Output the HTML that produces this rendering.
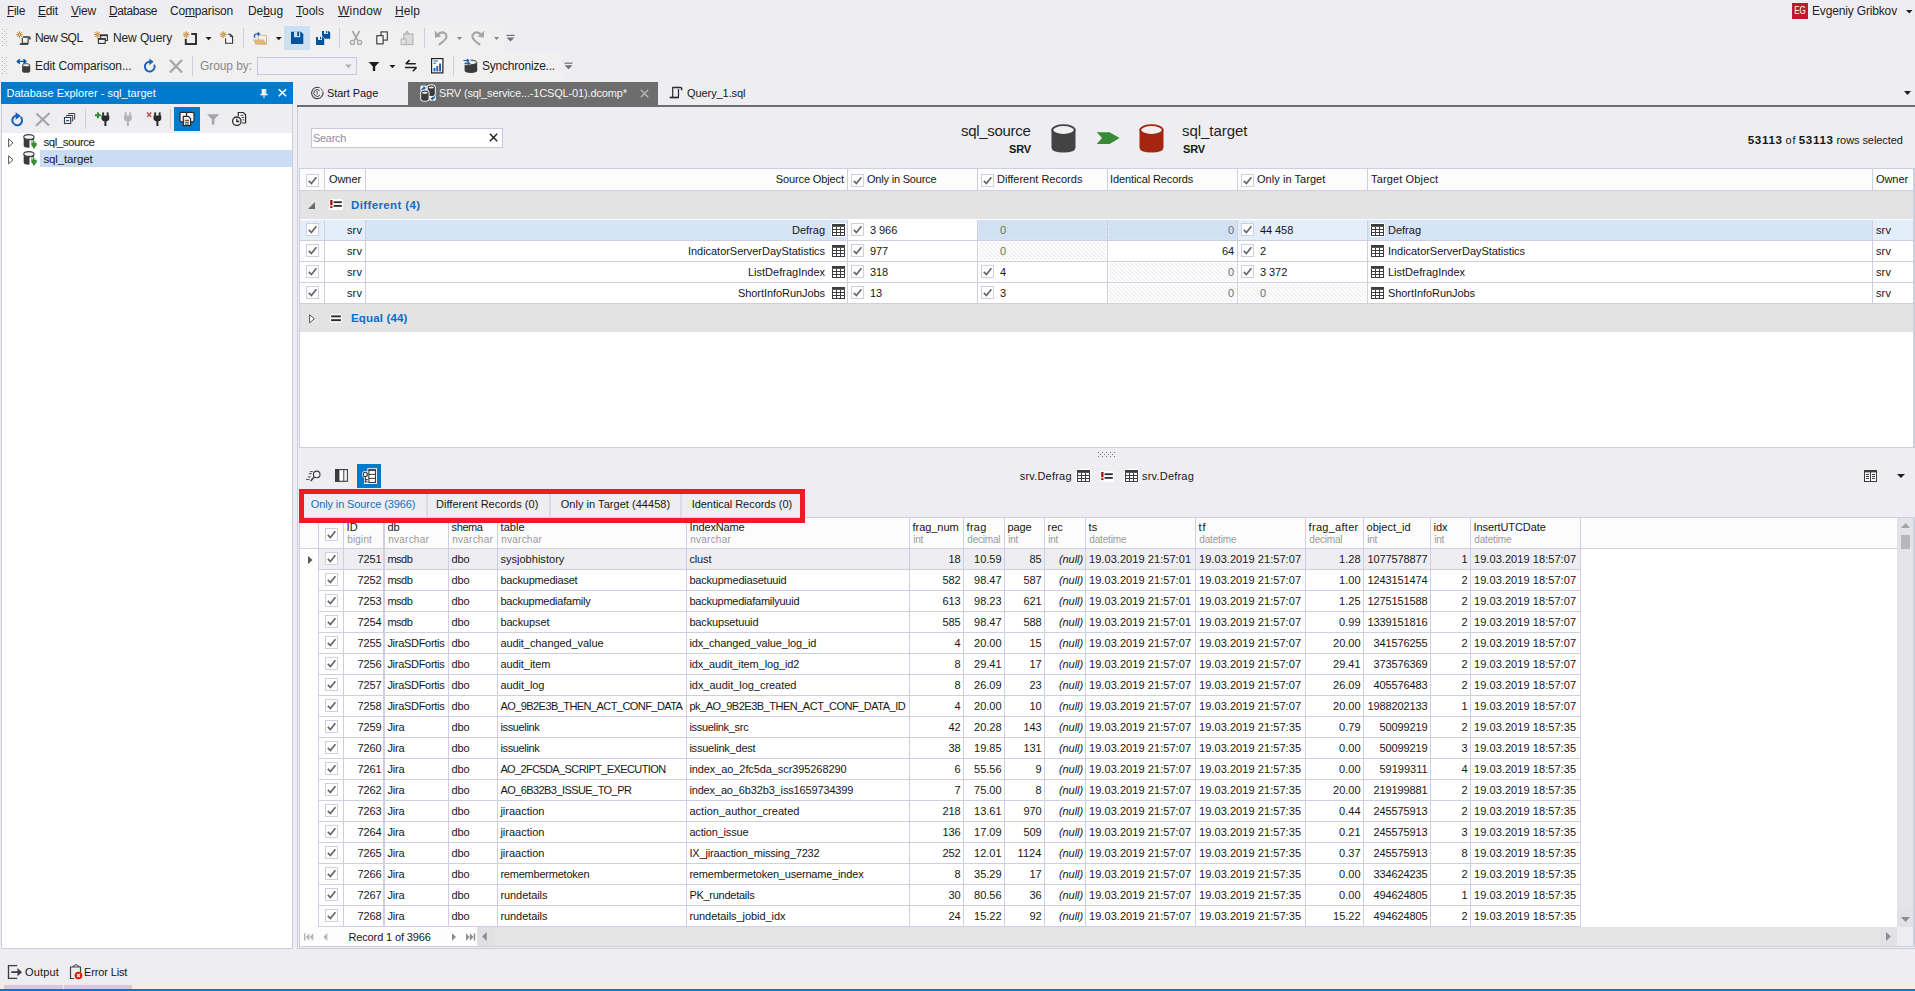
<!DOCTYPE html>
<html><head><meta charset="utf-8"><title>Data Compare</title>
<style>
html,body{margin:0;padding:0;}
body{width:1915px;height:991px;background:#eeeef2;overflow:hidden;position:relative;font-family:"Liberation Sans",sans-serif;color:#1e1e1e;}
div,svg{position:absolute;box-sizing:border-box;}
.t{white-space:nowrap;}
.m{font-size:12px;line-height:16px;color:#1e1e1e;}
.g{font-size:11px;line-height:14px;color:#161616;}
.s{font-size:10px;line-height:12px;color:#9a9a9a;}
u{text-decoration:underline;text-underline-offset:1px;}
</style></head>
<body>
<!-- top -->
<div style="left:0px;top:25px;width:504px;height:27px;background:#f0f0f1;"></div>
<div style="left:0px;top:52px;width:562px;height:28px;background:#f0f0f1;"></div>
<div class="t m" style="left:7px;top:3px;letter-spacing:-0.34px;"><u>F</u>ile</div>
<div class="t m" style="left:38px;top:3px;letter-spacing:-0.18px;"><u>E</u>dit</div>
<div class="t m" style="left:71px;top:3px;letter-spacing:-0.20px;"><u>V</u>iew</div>
<div class="t m" style="left:109px;top:3px;letter-spacing:-0.42px;"><u>D</u>atabase</div>
<div class="t m" style="left:170px;top:3px;letter-spacing:-0.17px;">Co<u>m</u>parison</div>
<div class="t m" style="left:248px;top:3px;letter-spacing:-0.08px;">De<u>b</u>ug</div>
<div class="t m" style="left:296px;top:3px;"><u>T</u>ools</div>
<div class="t m" style="left:338px;top:3px;letter-spacing:0.22px;"><u>W</u>indow</div>
<div class="t m" style="left:395px;top:3px;letter-spacing:0.08px;"><u>H</u>elp</div>
<div style="left:1792px;top:3px;width:16px;height:16px;background:#be1a2d;"><div class="t" style="left:0;top:0;width:16px;height:16px;line-height:16px;text-align:center;color:#fff;font-size:10px;transform:scaleX(0.8);">EG</div></div>
<div class="t m" style="left:1812px;top:3px;letter-spacing:-0.16px;">Evgeniy Gribkov</div>
<svg style="left:1906px;top:10px;" width="7" height="4" viewBox="0 0 7 4"><path d="M0 0h6.500l-3.250 3.600z" fill="#1e1e1e"/></svg>
<svg style="left:0;top:24px;" width="580" height="58" viewBox="0 24 580 58"><rect x="2" y="29" width="1" height="1" fill="#b4b4bc"/><rect x="6" y="29" width="1" height="1" fill="#b4b4bc"/><rect x="4" y="31" width="1" height="1" fill="#b4b4bc"/><rect x="2" y="33" width="1" height="1" fill="#b4b4bc"/><rect x="6" y="33" width="1" height="1" fill="#b4b4bc"/><rect x="4" y="35" width="1" height="1" fill="#b4b4bc"/><rect x="2" y="37" width="1" height="1" fill="#b4b4bc"/><rect x="6" y="37" width="1" height="1" fill="#b4b4bc"/><rect x="4" y="39" width="1" height="1" fill="#b4b4bc"/><rect x="2" y="41" width="1" height="1" fill="#b4b4bc"/><rect x="6" y="41" width="1" height="1" fill="#b4b4bc"/><rect x="4" y="43" width="1" height="1" fill="#b4b4bc"/><rect x="2" y="45" width="1" height="1" fill="#b4b4bc"/><rect x="6" y="45" width="1" height="1" fill="#b4b4bc"/><path d="M19.5 31.3V37.9M16.2 34.6H22.8M17.1 32.2L21.9 37.0M17.1 37.0L21.9 32.2" stroke="#c27d1a" stroke-width="0.95" fill="none"/><circle cx="19.5" cy="34.6" r="1.05" fill="#f6e8d0" stroke="#c27d1a" stroke-width="0.7"/><path d="M22.300 38v5.300h5.800v-5.300" fill="#f3f3f7" stroke="#333" stroke-width="1.100"/><path d="M22.800 37.100h6q1.200 0 1.200 1.400v1" stroke="#333" stroke-width="1.500" fill="none"/><path d="M19.800 44.100h8.300" stroke="#333" stroke-width="1.600" fill="none"/><path d="M97.3 31.3V37.9M94.0 34.6H100.6M94.89999999999999 32.2L99.7 37.0M94.89999999999999 37.0L99.7 32.2" stroke="#c27d1a" stroke-width="0.95" fill="none"/><circle cx="97.3" cy="34.6" r="1.05" fill="#f6e8d0" stroke="#c27d1a" stroke-width="0.7"/><rect x="100.600" y="35.200" width="6.800" height="5.300" fill="#f3f3f7" stroke="#333" stroke-width="1.100"/><rect x="100.100" y="34.500" width="7.800" height="1.700" fill="#333"/><rect x="98.400" y="38.700" width="6.800" height="4.700" fill="#f3f3f7" stroke="#333" stroke-width="1.100"/><rect x="97.900" y="38.100" width="7.800" height="1.700" fill="#333"/><path d="M186.2 31.349999999999998V37.949999999999996M182.89999999999998 34.65H189.5M183.79999999999998 32.25L188.6 37.05M183.79999999999998 37.05L188.6 32.25" stroke="#c27d1a" stroke-width="0.95" fill="none"/><circle cx="186.2" cy="34.65" r="1.05" fill="#f6e8d0" stroke="#c27d1a" stroke-width="0.7"/><path d="M185.800 38.800V44H196V33.900H191.200" stroke="#333" stroke-width="2" fill="none"/><path d="M205.6 36.9h6l-3.0 3.3z" fill="#1e1e1e"/><path d="M223.2 31.349999999999998V37.949999999999996M219.89999999999998 34.65H226.5M220.79999999999998 32.25L225.6 37.05M220.79999999999998 37.05L225.6 32.25" stroke="#c27d1a" stroke-width="0.95" fill="none"/><circle cx="223.2" cy="34.65" r="1.05" fill="#f6e8d0" stroke="#c27d1a" stroke-width="0.7"/><path d="M225.600 38.200v5h7v-6.700l-2.200-2.200h-2.600" stroke="#333" stroke-width="1.100" fill="#f5f5f8"/><path d="M230.200 34.400v2.300h2.300" stroke="#333" stroke-width="0.900" fill="none"/><rect x="243" y="28" width="1" height="20" fill="#cccedb"/><path d="M258.300 35.200h8.200v9h-8.200z" fill="#f2f2f6" stroke="#dcb67a" stroke-width="1"/><path d="M253.200 39.400h10.500l3.300 5.200h-11.500z" fill="#dcb67a"/><path d="M254.800 37.800q-1.500-3.500 2.400-3.900h1.200" stroke="#1a5fb4" stroke-width="1.400" fill="none"/><path d="M257.700 31.500l2.700 2.400-2.700 2.400z" fill="#1a5fb4"/><path d="M275.8 36.9h6l-3.0 3.3z" fill="#1e1e1e"/><rect x="284" y="26" width="26" height="24" fill="#cde0f3"/><path d="M291 31.800h10l2.300 2.200v10h-12.300z" fill="#00539c"/><rect x="294" y="31.800" width="6.200" height="5.400" fill="#cde0f3"/><rect x="297.200" y="31.800" width="1.900" height="4.200" fill="#00539c"/><path d="M322 30.900h6.500l1.700 1.700v6.100h-8.200z" fill="#00539c"/><rect x="324" y="30.900" width="4" height="3" fill="#f0f0f1"/><rect x="326" y="30.900" width="1.200" height="2.300" fill="#00539c"/><path d="M315.500 36.400h7.200l2 2v7h-9.200z" fill="#f0f0f1"/><path d="M316 36.900h6.500l1.700 1.700v6.300h-8.200z" fill="#00539c"/><rect x="318" y="36.900" width="4" height="3" fill="#f0f0f1"/><rect x="320" y="36.900" width="1.200" height="2.300" fill="#00539c"/><rect x="339" y="28" width="1" height="20" fill="#cccedb"/><path d="M352.400 30.800l5.200 9.500M359.600 30.800l-5.200 9.500" stroke="#a6a6a6" stroke-width="1.700" fill="none"/><circle cx="352.400" cy="42.400" r="2" stroke="#a6a6a6" stroke-width="1.300" fill="none"/><circle cx="359.600" cy="42.400" r="2" stroke="#a6a6a6" stroke-width="1.300" fill="none"/><rect x="381" y="31.900" width="6.300" height="8.200" fill="#f3f3f7" stroke="#2b2b2b" stroke-width="1.050"/><rect x="376.800" y="35.700" width="6.300" height="8.200" fill="#f3f3f7" stroke="#2b2b2b" stroke-width="1.050"/><path d="M405 34.200l2-2.900 2 2.900" stroke="#a8a8a8" stroke-width="1.100" fill="none"/><rect x="403.800" y="34" width="9.200" height="10.600" fill="#dcdcdc" stroke="#ababab" stroke-width="1"/><rect x="401.100" y="39" width="5" height="5.600" fill="#e2e2e2" stroke="#b4b4b4" stroke-width="1"/><rect x="424" y="28" width="1" height="20" fill="#cccedb"/><path d="M437 35.300q4.200-4.600 8-2 3.400 3.400-1 7.500l-5.200 4" stroke="#a6a6a6" stroke-width="2.100" fill="none"/><path d="M434.700 30.800l0.400 7 6.200-1.400z" fill="#a6a6a6"/><path d="M456.8 37h5.4l-2.7 3.0z" fill="#8a8a8a"/><path d="M481.900 35.300q-4.200-4.600-8-2-3.400 3.400 1 7.500l5.200 4" stroke="#a6a6a6" stroke-width="2.100" fill="none"/><path d="M484.200 30.800l-0.400 7-6.200-1.400z" fill="#a6a6a6"/><path d="M493.9 37h5.4l-2.7 3.0z" fill="#8a8a8a"/><rect x="506.5" y="34.8" width="8" height="1.2" fill="#717171"/><path d="M506.5 37.4h8l-4 4z" fill="#717171"/><rect x="2" y="57" width="1" height="1" fill="#b4b4bc"/><rect x="6" y="57" width="1" height="1" fill="#b4b4bc"/><rect x="4" y="59" width="1" height="1" fill="#b4b4bc"/><rect x="2" y="61" width="1" height="1" fill="#b4b4bc"/><rect x="6" y="61" width="1" height="1" fill="#b4b4bc"/><rect x="4" y="63" width="1" height="1" fill="#b4b4bc"/><rect x="2" y="65" width="1" height="1" fill="#b4b4bc"/><rect x="6" y="65" width="1" height="1" fill="#b4b4bc"/><rect x="4" y="67" width="1" height="1" fill="#b4b4bc"/><rect x="2" y="69" width="1" height="1" fill="#b4b4bc"/><rect x="6" y="69" width="1" height="1" fill="#b4b4bc"/><rect x="4" y="71" width="1" height="1" fill="#b4b4bc"/><rect x="2" y="73" width="1" height="1" fill="#b4b4bc"/><rect x="6" y="73" width="1" height="1" fill="#b4b4bc"/><path d="M18.500 61.400h6M19.800 59.200l-2.500 2.200 2.500 2.200M23.400 59.200l2.500 2.200-2.500 2.200" stroke="#00539c" stroke-width="1.400" fill="none"/><path d="M22.100 65.300v5.600q0 1.900 4.050 1.900t4.050-1.900v-5.600z" fill="#3c3c3c"/><ellipse cx="26.150" cy="65.200" rx="3.600" ry="1.600" fill="#f0f0f0" stroke="#3c3c3c" stroke-width="0.900"/><path d="M154.200 64.600a4.900 4.900 0 1 1-4.400-2.900" stroke="#1a5fb4" stroke-width="1.900" fill="none"/><path d="M149.300 58.400l4.300 3.400-4.300 3.400z" fill="#1a5fb4"/><path d="M170 60l12 12.500M182 60l-12 12.500" stroke="#a6a6a6" stroke-width="2.300" fill="none"/><rect x="192" y="56" width="1" height="20" fill="#cccedb"/><rect x="257.500" y="57.500" width="99" height="17" fill="#f0f0f4" stroke="#c6cadf" stroke-width="1"/><path d="M345 64.6h6.6l-3.3 3.5999999999999996z" fill="#b0b0b0"/><path d="M368.700 62.100h10.600l-4.100 4.400v4.600h-2.400v-4.600z" fill="#1e1e1e"/><path d="M389.4 64.9h6l-3.0 3.3z" fill="#1e1e1e"/><path d="M405.800 63.800h10M409.600 60.200l-3.800 3.600" stroke="#1e1e1e" stroke-width="1.600" fill="none"/><path d="M405 67.500h11.600M412.800 71.200l3.800-3.700" stroke="#1e1e1e" stroke-width="1.600" fill="none"/><rect x="431.600" y="58.600" width="11.300" height="14.300" fill="#fff" stroke="#1e1e1e" stroke-width="1.200"/><path d="M433.500 61h4.500M433.500 63.300h2.500" stroke="#1a5fb4" stroke-width="1.100"/><rect x="433.500" y="68" width="1.900" height="3.400" fill="#1a5fb4"/><rect x="436.300" y="66" width="1.900" height="5.400" fill="#1a5fb4"/><rect x="439.100" y="63.500" width="1.900" height="7.900" fill="#1a5fb4"/><rect x="453" y="56" width="1" height="20" fill="#cccedb"/><path d="M464.600 62.400v7.800q0 2.700 6.300 2.700t6.300-2.700v-7.800z" fill="#3a3a3a"/><ellipse cx="470.900" cy="62.400" rx="5.800" ry="2.300" fill="#ececec" stroke="#3a3a3a" stroke-width="1"/><rect x="463" y="58.800" width="7.500" height="6.300" fill="#f0f0f1" opacity="0.800"/><path d="M463.400 60.500h5.400M466.700 58.800l1.900 1.700-1.900 1.700" stroke="#1a5fb4" stroke-width="1.100" fill="none"/><path d="M464.600 63.400h5.400M467.900 61.700l1.900 1.700-1.900 1.700" stroke="#1a5fb4" stroke-width="1.100" fill="none"/><rect x="564.5" y="62.6" width="8" height="1.2" fill="#717171"/><path d="M564.5 65.2h8l-4 4z" fill="#717171"/></svg>
<div class="t m" style="left:35px;top:30px;letter-spacing:-0.55px;">New SQL</div>
<div class="t m" style="left:113px;top:30px;letter-spacing:-0.11px;">New Query</div>
<div class="t m" style="left:35px;top:58px;letter-spacing:-0.12px;">Edit Comparison...</div>
<div class="t m" style="left:200px;top:58px;color:#8a8a8a;letter-spacing:-0.08px;">Group by:</div>
<div class="t m" style="left:482px;top:58px;letter-spacing:-0.22px;">Synchronize...</div>
<!-- left -->
<div style="left:1px;top:82px;width:292px;height:867px;background:#ffffff;border:1px solid #cccedb;"></div>
<div style="left:1px;top:82px;width:292px;height:22px;background:#007acc;"></div>
<div class="t g" style="left:6.5px;top:86px;color:#fff;">Database Explorer - sql_target</div>
<div style="left:2px;top:104px;width:290px;height:29px;background:#eeeef2;"></div>
<svg style="left:0;top:82px;" width="294" height="52" viewBox="0 82 294 52"><path d="M261.700 89h4.600v5h1.400v1.200h-3.200v3h-1v-3h-3.200v-1.200h1.400z" fill="#fff"/><rect x="264.600" y="89.600" width="0.900" height="4.400" fill="#007acc" opacity="0.350"/><path d="M278.700 89.200l7.500 7M286.200 89.200l-7.500 7" stroke="#fff" stroke-width="1.500" fill="none"/><path d="M20.8 117.0a4.900 4.900 0 1 1-4.300-1.500" stroke="#1a5fb4" stroke-width="2" fill="none"/><path d="M15.6 112.2l5.300 3.800-5.300 3.800z" fill="#1a5fb4"/><path d="M36.500 113.500l12.500 12M49.500 113l-13.500 12.800" stroke="#a6a6a6" stroke-width="2.200" fill="none"/><path d="M68.500 114.500v-1h6.200v5.500h-1" stroke="#3c3c3c" stroke-width="1" fill="none"/><path d="M66.500 116.500v-1h6.200v5.500h-1" stroke="#3c3c3c" stroke-width="1" fill="none"/><rect x="64.500" y="117.500" width="6.200" height="6" fill="#f6f6f6" stroke="#3c3c3c" stroke-width="1.100"/><path d="M66 120.600h3.200" stroke="#1a5fb4" stroke-width="1.300"/><rect x="85" y="109" width="1" height="20" fill="#cccedb"/><path d="M97.900 112.300v6M94.900 115.300h6" stroke="#2e8b2e" stroke-width="1.900"/><rect x="102.2" y="112.4" width="1.900" height="3.400" fill="#2b2b2b"/><rect x="106.7" y="112.4" width="1.900" height="3.400" fill="#2b2b2b"/><path d="M101.5 115.4h7.800v2.800q0 2.600-2.900 3v4.800h-2v-4.800q-2.900-0.400-2.900-3z" fill="#2b2b2b"/><rect x="124.7" y="112.4" width="1.900" height="3.400" fill="#b4b4b4"/><rect x="129.2" y="112.4" width="1.900" height="3.400" fill="#b4b4b4"/><path d="M124 115.4h7.800v2.800q0 2.600-2.900 3v4.800h-2v-4.800q-2.900-0.400-2.900-3z" fill="#b4b4b4"/><path d="M147 112.500l4.300 4.300M151.300 112.500l-4.300 4.300" stroke="#c0392b" stroke-width="1.200"/><rect x="154.2" y="112.4" width="1.900" height="3.400" fill="#2b2b2b"/><rect x="158.7" y="112.4" width="1.900" height="3.400" fill="#2b2b2b"/><path d="M153.5 115.4h7.800v2.800q0 2.600-2.900 3v4.800h-2v-4.800q-2.900-0.400-2.900-3z" fill="#2b2b2b"/><rect x="170" y="109" width="1" height="20" fill="#cccedb"/><rect x="174" y="107" width="26" height="24" fill="#007acc"/><rect x="180" y="112.300" width="7.500" height="9.500" rx="1.500" fill="#f6f6f6" stroke="#2b2b2b" stroke-width="1.200"/><rect x="186.500" y="112.300" width="7.500" height="9.500" rx="1.500" fill="#f6f6f6" stroke="#2b2b2b" stroke-width="1.200"/><path d="M183.300 116.300h5l2.300 2.300v7h-7.300z" fill="#f6f6f6" stroke="#2b2b2b" stroke-width="1.200"/><path d="M184.800 120.300h4.300M184.800 122.200h4.300M184.800 124.100h4.300" stroke="#2b2b2b" stroke-width="0.900"/><path d="M207 114.200h12.200l-4.800 5v5.300h-2.600v-5.300z" fill="#a6a6a6"/><path d="M238.300 116v-3.500h5l2.300 2.300v8.200h-3.600" fill="#f6f6f6" stroke="#2b2b2b" stroke-width="1.200"/><path d="M240.500 115.300h3M241.500 117.600h2.800M242.500 119.900h1.800" stroke="#2b2b2b" stroke-width="0.900"/><circle cx="236.800" cy="121.200" r="4.200" fill="#f6f6f6" stroke="#2b2b2b" stroke-width="1.300"/><path d="M236.800 118.700v2.800h2.500" stroke="#2b2b2b" stroke-width="1.300" fill="none"/></svg>
<div style="left:40px;top:150px;width:252px;height:17px;background:#c9def5;"></div>
<svg style="left:8px;top:138px;" width="6" height="10" viewBox="0 0 6 10"><path d="M0.600 0.800v8l4.400-4z" fill="#fff" stroke="#555" stroke-width="1"/></svg>
<svg style="left:23px;top:134px;" width="15" height="15" viewBox="0 0 15 15"><path d="M0.700 3v8.500q0 2.200 5.200 2.200t5.200-2.200v-8.500z" fill="#3c3c3c"/><ellipse cx="5.900" cy="3" rx="5.200" ry="2.400" fill="#f6f6f6" stroke="#3c3c3c" stroke-width="1.100"/><rect x="6.500" y="6.300" width="8" height="8.500" fill="#fff"/><path d="M8.500 6.800v2h1.300v-2h1.600v2h1.300v-2h0.100v2h0.900v2.200q0 1.500-1.800 1.900v1.700h-1.800v-1.700q-1.800-0.400-1.800-1.900v-2.200h0.900v-2z" fill="#388a34"/></svg>
<div class="t g" style="left:43.5px;top:135.3px;font-size:11.5px;letter-spacing:-0.46px;">sql_source</div>
<svg style="left:8px;top:155px;" width="6" height="10" viewBox="0 0 6 10"><path d="M0.600 0.800v8l4.400-4z" fill="#fff" stroke="#555" stroke-width="1"/></svg>
<svg style="left:23px;top:151px;" width="15" height="15" viewBox="0 0 15 15"><path d="M0.700 3v8.500q0 2.200 5.200 2.200t5.200-2.200v-8.500z" fill="#3c3c3c"/><ellipse cx="5.900" cy="3" rx="5.200" ry="2.400" fill="#f6f6f6" stroke="#3c3c3c" stroke-width="1.100"/><rect x="6.500" y="6.300" width="8" height="8.500" fill="#fff"/><path d="M8.500 6.800v2h1.300v-2h1.600v2h1.300v-2h0.100v2h0.900v2.200q0 1.500-1.800 1.900v1.700h-1.800v-1.700q-1.800-0.400-1.800-1.900v-2.200h0.900v-2z" fill="#388a34"/></svg>
<div class="t g" style="left:43.5px;top:152.3px;font-size:11.5px;letter-spacing:-0.15px;">sql_target</div>
<!-- main1 -->
<svg style="left:310px;top:86px;" width="14" height="14" viewBox="0 0 14 14"><path d="M9.600 1.700a5.700 5.700 0 1 0 3.300 4" stroke="#3c3c3c" stroke-width="1.100" fill="none"/><path d="M10.800 2.600l1.600 1.900" stroke="#3c3c3c" stroke-width="1" fill="none"/><path d="M9.600 4.600a3.400 3.400 0 1 0 0.400 4.300" stroke="#3c3c3c" stroke-width="1" fill="none"/><path d="M6.300 6l0.900-0.700v3.200" stroke="#3c3c3c" stroke-width="0.800" fill="none"/></svg>
<div class="t g" style="left:327px;top:86px;letter-spacing:-0.08px;">Start Page</div>
<div style="left:408px;top:82px;width:250px;height:23px;background:#6d6d6d;"></div>
<svg style="left:418px;top:84px;" width="20" height="19" viewBox="418 84 20 19"><rect x="420.300" y="85.600" width="6.500" height="5.500" rx="1.500" fill="#f4f4f4"/><rect x="429.300" y="95" width="6.500" height="5.800" rx="1.500" fill="#f4f4f4"/><path d="M427.8 87.3v6.8q0 2.0 3.5 2.0t3.5-2.0v-6.8q0-2.0-3.5-2.0t-3.5 2.0z" fill="#f4f4f4" stroke="#f4f4f4" stroke-width="2"/><path d="M427.8 87.3v6.8q0 2.0 3.5 2.0t3.5-2.0v-6.8q0-2.0-3.5-2.0t-3.5 2.0z" fill="#3a3a3a"/><ellipse cx="431.3" cy="87.5" rx="2.7" ry="1.1" fill="#e4e4e4"/><path d="M421.2 92.6v6.2q0 2.0 3.7 2.0t3.7-2.0v-6.2q0-2.0-3.7-2.0t-3.7 2.0z" fill="#f4f4f4" stroke="#f4f4f4" stroke-width="2"/><path d="M421.2 92.6v6.2q0 2.0 3.7 2.0t3.7-2.0v-6.2q0-2.0-3.7-2.0t-3.7 2.0z" fill="#3a3a3a"/><ellipse cx="424.9" cy="92.8" rx="2.9000000000000004" ry="1.1" fill="#e4e4e4"/><path d="M421.900 90.300q0-2.300 2.300-2.300M423.400 86.500l1.600 1.500-1.600 1.500" stroke="#1a5fb4" stroke-width="1.200" fill="none"/><path d="M434.500 96.300q0 2.300-2.300 2.300M433 97.100l-1.600 1.500 1.600 1.500" stroke="#1a5fb4" stroke-width="1.200" fill="none"/></svg>
<div class="t g" style="left:439px;top:86px;color:#f3f3f3;letter-spacing:-0.14px;">SRV (sql_service...-1CSQL-01).dcomp*</div>
<svg style="left:640px;top:89px;" width="9" height="9" viewBox="0 0 9 9"><path d="M0.800 0.800l7.400 7.400M8.200 0.800l-7.400 7.400" stroke="#b4b4b4" stroke-width="1.500"/></svg>
<svg style="left:669px;top:86px;" width="14" height="13" viewBox="0 0 14 13"><path d="M3.700 1.600v9.300M9.500 3v8" stroke="#2b2b2b" stroke-width="1.200" fill="none"/><path d="M3.200 1.400h8.300q1.200 0 1.200 1.300v1.500" stroke="#2b2b2b" stroke-width="1.500" fill="none"/><path d="M0.700 11.500h9.300" stroke="#2b2b2b" stroke-width="1.700" fill="none"/></svg>
<div class="t g" style="left:687px;top:86px;letter-spacing:-0.08px;">Query_1.sql</div>
<svg style="left:1904px;top:91px;" width="7" height="4" viewBox="0 0 7 4"><path d="M0 0h7l-3.500 4z" fill="#1e1e1e"/></svg>
<div style="left:297px;top:105px;width:1618px;height:2px;background:#6d6d6d;"></div>
<div style="left:297px;top:107px;width:1px;height:842px;background:#cccedb;"></div>
<div style="left:297px;top:948px;width:1618px;height:1px;background:#cccedb;"></div>
<div style="left:311px;top:128px;width:192px;height:20px;background:#ffffff;border:1px solid #c6cadf;"></div>
<div class="t g" style="left:313px;top:131px;color:#8e8e9a;letter-spacing:-0.31px;">Search</div>
<svg style="left:489px;top:133px;" width="9" height="9" viewBox="0 0 9 9"><path d="M0.800 0.800l7.400 7.400M8.200 0.800l-7.400 7.400" stroke="#1e1e1e" stroke-width="1.400"/></svg>
<div class="t m" style="left:961px;top:122px;font-size:15px;line-height:18px;letter-spacing:-0.30px;">sql_source</div>
<div class="t g" style="left:1009px;top:142px;font-weight:bold;letter-spacing:-0.14px;">SRV</div>
<svg style="left:1050.5px;top:124px;" width="25" height="29" viewBox="0 0 25 29"><path d="M0.500 5.500v18q0 5 12 5t12-5v-18z" fill="#434343"/><ellipse cx="12.500" cy="6" rx="11.200" ry="4.800" fill="#f0f0f3" stroke="#434343" stroke-width="1.800"/></svg>
<svg style="left:1096px;top:131px;" width="25" height="14" viewBox="0 0 25 14"><path d="M0.800 1.300h12.800l10 5.800-10 5.800h-12.800l5.200-5.800z" fill="#378a36"/></svg>
<svg style="left:1138.5px;top:124px;" width="25" height="29" viewBox="0 0 25 29"><path d="M0.500 5.500v18q0 5 12 5t12-5v-18z" fill="#a5260f"/><ellipse cx="12.500" cy="6" rx="11.200" ry="4.800" fill="#f0f0f3" stroke="#a5260f" stroke-width="1.800"/></svg>
<div class="t m" style="left:1182px;top:122px;font-size:15px;line-height:18px;letter-spacing:-0.04px;">sql_target</div>
<div class="t g" style="left:1183px;top:142px;font-weight:bold;letter-spacing:-0.14px;">SRV</div>
<div class="t g" style="left:1747.7px;top:133px;font-weight:bold;font-size:11.600px;letter-spacing:0.68px;">53113</div>
<div class="t g" style="left:1785.5px;top:133px;letter-spacing:0.81px;">of</div>
<div class="t g" style="left:1798.7px;top:133px;font-weight:bold;font-size:11.600px;letter-spacing:0.68px;">53113</div>
<div class="t g" style="left:1836.5px;top:133px;letter-spacing:-0.07px;">rows selected</div>
<div style="left:299px;top:168px;width:1615px;height:280px;background:#ffffff;border:1px solid #cdd0e0;"></div>
<div style="left:1914px;top:168px;width:1px;height:280px;background:#cdd0e0;"></div>
<div style="left:300px;top:169px;width:1613px;height:21px;background:#fcfcfc;"></div>
<div style="left:300px;top:190px;width:1613px;height:1px;background:#cdd0e0;"></div>
<div style="left:324px;top:169px;width:1px;height:21px;background:#cdd0e0;"></div>
<div style="left:365px;top:169px;width:1px;height:21px;background:#cdd0e0;"></div>
<div style="left:847px;top:169px;width:1px;height:21px;background:#cdd0e0;"></div>
<div style="left:977px;top:169px;width:1px;height:21px;background:#cdd0e0;"></div>
<div style="left:1107px;top:169px;width:1px;height:21px;background:#cdd0e0;"></div>
<div style="left:1237px;top:169px;width:1px;height:21px;background:#cdd0e0;"></div>
<div style="left:1367px;top:169px;width:1px;height:21px;background:#cdd0e0;"></div>
<div style="left:1872px;top:169px;width:1px;height:21px;background:#cdd0e0;"></div>
<svg style="left:306px;top:174px;" width="13" height="13" viewBox="0 0 13 13"><rect x="0.500" y="0.500" width="12" height="12" fill="#fff" stroke="#cdd0e0" stroke-width="1"/><path d="M2.800 6.800l2.600 2.700 5-6.300" stroke="#666" stroke-width="1.700" fill="none"/></svg>
<div class="t g" style="left:329px;top:172px;letter-spacing:-0.08px;">Owner</div>
<div class="t g" style="left:775.8px;top:172px;letter-spacing:-0.12px;">Source Object</div>
<svg style="left:851px;top:174px;" width="13" height="13" viewBox="0 0 13 13"><rect x="0.500" y="0.500" width="12" height="12" fill="#fff" stroke="#cdd0e0" stroke-width="1"/><path d="M2.800 6.800l2.600 2.700 5-6.300" stroke="#666" stroke-width="1.700" fill="none"/></svg>
<div class="t g" style="left:867px;top:172px;letter-spacing:-0.20px;">Only in Source</div>
<svg style="left:981px;top:174px;" width="13" height="13" viewBox="0 0 13 13"><rect x="0.500" y="0.500" width="12" height="12" fill="#fff" stroke="#cdd0e0" stroke-width="1"/><path d="M2.800 6.800l2.600 2.700 5-6.300" stroke="#666" stroke-width="1.700" fill="none"/></svg>
<div class="t g" style="left:997px;top:172px;">Different Records</div>
<div class="t g" style="left:1110px;top:172px;letter-spacing:-0.11px;">Identical Records</div>
<svg style="left:1241px;top:174px;" width="13" height="13" viewBox="0 0 13 13"><rect x="0.500" y="0.500" width="12" height="12" fill="#fff" stroke="#cdd0e0" stroke-width="1"/><path d="M2.800 6.800l2.600 2.700 5-6.300" stroke="#666" stroke-width="1.700" fill="none"/></svg>
<div class="t g" style="left:1257px;top:172px;letter-spacing:0.05px;">Only in Target</div>
<div class="t g" style="left:1371px;top:172px;letter-spacing:0.14px;">Target Object</div>
<div class="t g" style="left:1876px;top:172px;letter-spacing:-0.08px;">Owner</div>
<div style="left:300px;top:191px;width:1613px;height:28px;background:#e3e3e3;"></div>
<svg style="left:308px;top:202px;" width="8" height="8" viewBox="0 0 8 8"><path d="M7 0v7h-7z" fill="#6a6a6a"/></svg>
<svg style="left:328.6px;top:199.3px;" width="14" height="11" viewBox="0 0 14 11"><rect x="0" y="0" width="14" height="11" rx="1.500" fill="#fff" opacity="0.850"/><rect x="1.200" y="1" width="2.300" height="5.200" fill="#a01000"/><rect x="1.200" y="7.200" width="2.300" height="1.900" fill="#a01000"/><rect x="4.600" y="2.300" width="8.200" height="1.800" fill="#2b2b2b"/><rect x="4.600" y="6" width="8.200" height="1.800" fill="#2b2b2b"/></svg>
<div class="t g" style="left:351px;top:198px;font-weight:bold;color:#0b6fcc;font-size:11.500px;letter-spacing:0.38px;">Different (4)</div>
<div style="left:300px;top:219px;width:1613px;height:1px;background:#ffffff;"></div>
<div style="left:300px;top:220px;width:1613px;height:20px;background:#e4edfa;"></div>
<div style="left:366px;top:220px;width:480px;height:20px;background:#d6e4f7;"></div>
<div style="left:848px;top:220px;width:129px;height:20px;background:#ffffff;"></div>
<div style="left:978px;top:220px;width:259px;height:20px;background:#d6e4f7;"></div>
<div style="left:1368px;top:220px;width:504px;height:20px;background:#d6e4f7;"></div>
<div style="left:979px;top:221px;width:127px;height:18px;background:repeating-linear-gradient(45deg,#d6e4f7 0,#d6e4f7 2.05px,#cedcf0 2.05px,#cedcf0 2.83px);"></div>
<div style="left:1109px;top:221px;width:127px;height:18px;background:repeating-linear-gradient(45deg,#d6e4f7 0,#d6e4f7 2.05px,#cedcf0 2.05px,#cedcf0 2.83px);"></div>
<div style="left:300px;top:240px;width:1613px;height:1px;background:#cdd0e0;"></div>
<div style="left:324px;top:220px;width:1px;height:20px;background:#cdd0e0;"></div>
<div style="left:365px;top:220px;width:1px;height:20px;background:#cdd0e0;"></div>
<div style="left:847px;top:220px;width:1px;height:20px;background:#cdd0e0;"></div>
<div style="left:977px;top:220px;width:1px;height:20px;background:#cdd0e0;"></div>
<div style="left:1107px;top:220px;width:1px;height:20px;background:#cdd0e0;"></div>
<div style="left:1237px;top:220px;width:1px;height:20px;background:#cdd0e0;"></div>
<div style="left:1367px;top:220px;width:1px;height:20px;background:#cdd0e0;"></div>
<div style="left:1872px;top:220px;width:1px;height:20px;background:#cdd0e0;"></div>
<svg style="left:306px;top:223px;" width="13" height="13" viewBox="0 0 13 13"><rect x="0.500" y="0.500" width="12" height="12" fill="#fff" stroke="#cdd0e0" stroke-width="1"/><path d="M2.800 6.800l2.600 2.700 5-6.300" stroke="#666" stroke-width="1.700" fill="none"/></svg>
<div class="t g" style="left:347px;top:223px;letter-spacing:0.11px;">srv</div>
<div class="t g" style="left:792px;top:223px;">Defrag</div>
<svg style="left:831px;top:223px;" width="15" height="14" viewBox="0 0 15 14"><rect x="0" y="0" width="15" height="14" rx="1" fill="#fff" opacity="0.900"/><rect x="1" y="1" width="13" height="12" fill="#3c3c3c"/><rect x="1" y="3" width="13" height="0.600" fill="#6a6a6a"/><rect x="2" y="4" width="3" height="2" fill="#fff"/><rect x="6" y="4" width="3" height="2" fill="#fff"/><rect x="10" y="4" width="3" height="2" fill="#fff"/><rect x="2" y="7" width="3" height="2" fill="#fff"/><rect x="6" y="7" width="3" height="2" fill="#fff"/><rect x="10" y="7" width="3" height="2" fill="#fff"/><rect x="2" y="10" width="3" height="2" fill="#fff"/><rect x="6" y="10" width="3" height="2" fill="#fff"/><rect x="10" y="10" width="3" height="2" fill="#fff"/></svg>
<svg style="left:851px;top:223px;" width="13" height="13" viewBox="0 0 13 13"><rect x="0.500" y="0.500" width="12" height="12" fill="#fff" stroke="#cdd0e0" stroke-width="1"/><path d="M2.800 6.800l2.600 2.700 5-6.300" stroke="#666" stroke-width="1.700" fill="none"/></svg>
<div class="t g" style="left:870px;top:223px;letter-spacing:-0.07px;">3 966</div>
<div class="t g" style="left:1000px;top:223px;color:#6e6e6e;letter-spacing:-0.12px;">0</div>
<div class="t g" style="left:1228px;top:223px;color:#6e6e6e;letter-spacing:-0.12px;">0</div>
<svg style="left:1241px;top:223px;" width="13" height="13" viewBox="0 0 13 13"><rect x="0.500" y="0.500" width="12" height="12" fill="#fff" stroke="#cdd0e0" stroke-width="1"/><path d="M2.800 6.800l2.600 2.700 5-6.300" stroke="#666" stroke-width="1.700" fill="none"/></svg>
<div class="t g" style="left:1260px;top:223px;letter-spacing:-0.08px;">44 458</div>
<svg style="left:1370px;top:223px;" width="15" height="14" viewBox="0 0 15 14"><rect x="0" y="0" width="15" height="14" rx="1" fill="#fff" opacity="0.900"/><rect x="1" y="1" width="13" height="12" fill="#3c3c3c"/><rect x="1" y="3" width="13" height="0.600" fill="#6a6a6a"/><rect x="2" y="4" width="3" height="2" fill="#fff"/><rect x="6" y="4" width="3" height="2" fill="#fff"/><rect x="10" y="4" width="3" height="2" fill="#fff"/><rect x="2" y="7" width="3" height="2" fill="#fff"/><rect x="6" y="7" width="3" height="2" fill="#fff"/><rect x="10" y="7" width="3" height="2" fill="#fff"/><rect x="2" y="10" width="3" height="2" fill="#fff"/><rect x="6" y="10" width="3" height="2" fill="#fff"/><rect x="10" y="10" width="3" height="2" fill="#fff"/></svg>
<div class="t g" style="left:1388px;top:223px;">Defrag</div>
<div class="t g" style="left:1876px;top:223px;letter-spacing:0.11px;">srv</div>
<div style="left:979px;top:242px;width:127px;height:18px;background:repeating-linear-gradient(45deg,#ffffff 0,#ffffff 2.05px,#f1f1f2 2.05px,#f1f1f2 2.83px);"></div>
<div style="left:300px;top:261px;width:1613px;height:1px;background:#cdd0e0;"></div>
<div style="left:324px;top:241px;width:1px;height:20px;background:#cdd0e0;"></div>
<div style="left:365px;top:241px;width:1px;height:20px;background:#cdd0e0;"></div>
<div style="left:847px;top:241px;width:1px;height:20px;background:#cdd0e0;"></div>
<div style="left:977px;top:241px;width:1px;height:20px;background:#cdd0e0;"></div>
<div style="left:1107px;top:241px;width:1px;height:20px;background:#cdd0e0;"></div>
<div style="left:1237px;top:241px;width:1px;height:20px;background:#cdd0e0;"></div>
<div style="left:1367px;top:241px;width:1px;height:20px;background:#cdd0e0;"></div>
<div style="left:1872px;top:241px;width:1px;height:20px;background:#cdd0e0;"></div>
<svg style="left:306px;top:244px;" width="13" height="13" viewBox="0 0 13 13"><rect x="0.500" y="0.500" width="12" height="12" fill="#fff" stroke="#cdd0e0" stroke-width="1"/><path d="M2.800 6.800l2.600 2.700 5-6.300" stroke="#666" stroke-width="1.700" fill="none"/></svg>
<div class="t g" style="left:347px;top:244px;letter-spacing:0.11px;">srv</div>
<div class="t g" style="left:688px;top:244px;letter-spacing:-0.04px;">IndicatorServerDayStatistics</div>
<svg style="left:831px;top:244px;" width="15" height="14" viewBox="0 0 15 14"><rect x="0" y="0" width="15" height="14" rx="1" fill="#fff" opacity="0.900"/><rect x="1" y="1" width="13" height="12" fill="#3c3c3c"/><rect x="1" y="3" width="13" height="0.600" fill="#6a6a6a"/><rect x="2" y="4" width="3" height="2" fill="#fff"/><rect x="6" y="4" width="3" height="2" fill="#fff"/><rect x="10" y="4" width="3" height="2" fill="#fff"/><rect x="2" y="7" width="3" height="2" fill="#fff"/><rect x="6" y="7" width="3" height="2" fill="#fff"/><rect x="10" y="7" width="3" height="2" fill="#fff"/><rect x="2" y="10" width="3" height="2" fill="#fff"/><rect x="6" y="10" width="3" height="2" fill="#fff"/><rect x="10" y="10" width="3" height="2" fill="#fff"/></svg>
<svg style="left:851px;top:244px;" width="13" height="13" viewBox="0 0 13 13"><rect x="0.500" y="0.500" width="12" height="12" fill="#fff" stroke="#cdd0e0" stroke-width="1"/><path d="M2.800 6.800l2.600 2.700 5-6.300" stroke="#666" stroke-width="1.700" fill="none"/></svg>
<div class="t g" style="left:870px;top:244px;letter-spacing:-0.12px;">977</div>
<div class="t g" style="left:1000px;top:244px;color:#6e6e6e;letter-spacing:-0.12px;">0</div>
<div class="t g" style="left:1222px;top:244px;color:#202020;letter-spacing:-0.12px;">64</div>
<svg style="left:1241px;top:244px;" width="13" height="13" viewBox="0 0 13 13"><rect x="0.500" y="0.500" width="12" height="12" fill="#fff" stroke="#cdd0e0" stroke-width="1"/><path d="M2.800 6.800l2.600 2.700 5-6.300" stroke="#666" stroke-width="1.700" fill="none"/></svg>
<div class="t g" style="left:1260px;top:244px;letter-spacing:-0.12px;">2</div>
<svg style="left:1370px;top:244px;" width="15" height="14" viewBox="0 0 15 14"><rect x="0" y="0" width="15" height="14" rx="1" fill="#fff" opacity="0.900"/><rect x="1" y="1" width="13" height="12" fill="#3c3c3c"/><rect x="1" y="3" width="13" height="0.600" fill="#6a6a6a"/><rect x="2" y="4" width="3" height="2" fill="#fff"/><rect x="6" y="4" width="3" height="2" fill="#fff"/><rect x="10" y="4" width="3" height="2" fill="#fff"/><rect x="2" y="7" width="3" height="2" fill="#fff"/><rect x="6" y="7" width="3" height="2" fill="#fff"/><rect x="10" y="7" width="3" height="2" fill="#fff"/><rect x="2" y="10" width="3" height="2" fill="#fff"/><rect x="6" y="10" width="3" height="2" fill="#fff"/><rect x="10" y="10" width="3" height="2" fill="#fff"/></svg>
<div class="t g" style="left:1388px;top:244px;letter-spacing:-0.04px;">IndicatorServerDayStatistics</div>
<div class="t g" style="left:1876px;top:244px;letter-spacing:0.11px;">srv</div>
<div style="left:1109px;top:263px;width:127px;height:18px;background:repeating-linear-gradient(45deg,#ffffff 0,#ffffff 2.05px,#f1f1f2 2.05px,#f1f1f2 2.83px);"></div>
<div style="left:300px;top:282px;width:1613px;height:1px;background:#cdd0e0;"></div>
<div style="left:324px;top:262px;width:1px;height:20px;background:#cdd0e0;"></div>
<div style="left:365px;top:262px;width:1px;height:20px;background:#cdd0e0;"></div>
<div style="left:847px;top:262px;width:1px;height:20px;background:#cdd0e0;"></div>
<div style="left:977px;top:262px;width:1px;height:20px;background:#cdd0e0;"></div>
<div style="left:1107px;top:262px;width:1px;height:20px;background:#cdd0e0;"></div>
<div style="left:1237px;top:262px;width:1px;height:20px;background:#cdd0e0;"></div>
<div style="left:1367px;top:262px;width:1px;height:20px;background:#cdd0e0;"></div>
<div style="left:1872px;top:262px;width:1px;height:20px;background:#cdd0e0;"></div>
<svg style="left:306px;top:265px;" width="13" height="13" viewBox="0 0 13 13"><rect x="0.500" y="0.500" width="12" height="12" fill="#fff" stroke="#cdd0e0" stroke-width="1"/><path d="M2.800 6.800l2.600 2.700 5-6.300" stroke="#666" stroke-width="1.700" fill="none"/></svg>
<div class="t g" style="left:347px;top:265px;letter-spacing:0.11px;">srv</div>
<div class="t g" style="left:748px;top:265px;">ListDefragIndex</div>
<svg style="left:831px;top:265px;" width="15" height="14" viewBox="0 0 15 14"><rect x="0" y="0" width="15" height="14" rx="1" fill="#fff" opacity="0.900"/><rect x="1" y="1" width="13" height="12" fill="#3c3c3c"/><rect x="1" y="3" width="13" height="0.600" fill="#6a6a6a"/><rect x="2" y="4" width="3" height="2" fill="#fff"/><rect x="6" y="4" width="3" height="2" fill="#fff"/><rect x="10" y="4" width="3" height="2" fill="#fff"/><rect x="2" y="7" width="3" height="2" fill="#fff"/><rect x="6" y="7" width="3" height="2" fill="#fff"/><rect x="10" y="7" width="3" height="2" fill="#fff"/><rect x="2" y="10" width="3" height="2" fill="#fff"/><rect x="6" y="10" width="3" height="2" fill="#fff"/><rect x="10" y="10" width="3" height="2" fill="#fff"/></svg>
<svg style="left:851px;top:265px;" width="13" height="13" viewBox="0 0 13 13"><rect x="0.500" y="0.500" width="12" height="12" fill="#fff" stroke="#cdd0e0" stroke-width="1"/><path d="M2.800 6.800l2.600 2.700 5-6.300" stroke="#666" stroke-width="1.700" fill="none"/></svg>
<div class="t g" style="left:870px;top:265px;letter-spacing:-0.12px;">318</div>
<svg style="left:981px;top:265px;" width="13" height="13" viewBox="0 0 13 13"><rect x="0.500" y="0.500" width="12" height="12" fill="#fff" stroke="#cdd0e0" stroke-width="1"/><path d="M2.800 6.800l2.600 2.700 5-6.300" stroke="#666" stroke-width="1.700" fill="none"/></svg>
<div class="t g" style="left:1000px;top:265px;letter-spacing:-0.12px;">4</div>
<div class="t g" style="left:1228px;top:265px;color:#6e6e6e;letter-spacing:-0.12px;">0</div>
<svg style="left:1241px;top:265px;" width="13" height="13" viewBox="0 0 13 13"><rect x="0.500" y="0.500" width="12" height="12" fill="#fff" stroke="#cdd0e0" stroke-width="1"/><path d="M2.800 6.800l2.600 2.700 5-6.300" stroke="#666" stroke-width="1.700" fill="none"/></svg>
<div class="t g" style="left:1260px;top:265px;letter-spacing:-0.07px;">3 372</div>
<svg style="left:1370px;top:265px;" width="15" height="14" viewBox="0 0 15 14"><rect x="0" y="0" width="15" height="14" rx="1" fill="#fff" opacity="0.900"/><rect x="1" y="1" width="13" height="12" fill="#3c3c3c"/><rect x="1" y="3" width="13" height="0.600" fill="#6a6a6a"/><rect x="2" y="4" width="3" height="2" fill="#fff"/><rect x="6" y="4" width="3" height="2" fill="#fff"/><rect x="10" y="4" width="3" height="2" fill="#fff"/><rect x="2" y="7" width="3" height="2" fill="#fff"/><rect x="6" y="7" width="3" height="2" fill="#fff"/><rect x="10" y="7" width="3" height="2" fill="#fff"/><rect x="2" y="10" width="3" height="2" fill="#fff"/><rect x="6" y="10" width="3" height="2" fill="#fff"/><rect x="10" y="10" width="3" height="2" fill="#fff"/></svg>
<div class="t g" style="left:1388px;top:265px;">ListDefragIndex</div>
<div class="t g" style="left:1876px;top:265px;letter-spacing:0.11px;">srv</div>
<div style="left:1109px;top:284px;width:127px;height:18px;background:repeating-linear-gradient(45deg,#ffffff 0,#ffffff 2.05px,#f1f1f2 2.05px,#f1f1f2 2.83px);"></div>
<div style="left:1239px;top:284px;width:127px;height:18px;background:repeating-linear-gradient(45deg,#ffffff 0,#ffffff 2.05px,#f1f1f2 2.05px,#f1f1f2 2.83px);"></div>
<div style="left:300px;top:303px;width:1613px;height:1px;background:#cdd0e0;"></div>
<div style="left:324px;top:283px;width:1px;height:20px;background:#cdd0e0;"></div>
<div style="left:365px;top:283px;width:1px;height:20px;background:#cdd0e0;"></div>
<div style="left:847px;top:283px;width:1px;height:20px;background:#cdd0e0;"></div>
<div style="left:977px;top:283px;width:1px;height:20px;background:#cdd0e0;"></div>
<div style="left:1107px;top:283px;width:1px;height:20px;background:#cdd0e0;"></div>
<div style="left:1237px;top:283px;width:1px;height:20px;background:#cdd0e0;"></div>
<div style="left:1367px;top:283px;width:1px;height:20px;background:#cdd0e0;"></div>
<div style="left:1872px;top:283px;width:1px;height:20px;background:#cdd0e0;"></div>
<svg style="left:306px;top:286px;" width="13" height="13" viewBox="0 0 13 13"><rect x="0.500" y="0.500" width="12" height="12" fill="#fff" stroke="#cdd0e0" stroke-width="1"/><path d="M2.800 6.800l2.600 2.700 5-6.300" stroke="#666" stroke-width="1.700" fill="none"/></svg>
<div class="t g" style="left:347px;top:286px;letter-spacing:0.11px;">srv</div>
<div class="t g" style="left:738px;top:286px;letter-spacing:-0.07px;">ShortInfoRunJobs</div>
<svg style="left:831px;top:286px;" width="15" height="14" viewBox="0 0 15 14"><rect x="0" y="0" width="15" height="14" rx="1" fill="#fff" opacity="0.900"/><rect x="1" y="1" width="13" height="12" fill="#3c3c3c"/><rect x="1" y="3" width="13" height="0.600" fill="#6a6a6a"/><rect x="2" y="4" width="3" height="2" fill="#fff"/><rect x="6" y="4" width="3" height="2" fill="#fff"/><rect x="10" y="4" width="3" height="2" fill="#fff"/><rect x="2" y="7" width="3" height="2" fill="#fff"/><rect x="6" y="7" width="3" height="2" fill="#fff"/><rect x="10" y="7" width="3" height="2" fill="#fff"/><rect x="2" y="10" width="3" height="2" fill="#fff"/><rect x="6" y="10" width="3" height="2" fill="#fff"/><rect x="10" y="10" width="3" height="2" fill="#fff"/></svg>
<svg style="left:851px;top:286px;" width="13" height="13" viewBox="0 0 13 13"><rect x="0.500" y="0.500" width="12" height="12" fill="#fff" stroke="#cdd0e0" stroke-width="1"/><path d="M2.800 6.800l2.600 2.700 5-6.300" stroke="#666" stroke-width="1.700" fill="none"/></svg>
<div class="t g" style="left:870px;top:286px;letter-spacing:-0.12px;">13</div>
<svg style="left:981px;top:286px;" width="13" height="13" viewBox="0 0 13 13"><rect x="0.500" y="0.500" width="12" height="12" fill="#fff" stroke="#cdd0e0" stroke-width="1"/><path d="M2.800 6.800l2.600 2.700 5-6.300" stroke="#666" stroke-width="1.700" fill="none"/></svg>
<div class="t g" style="left:1000px;top:286px;letter-spacing:-0.12px;">3</div>
<div class="t g" style="left:1228px;top:286px;color:#6e6e6e;letter-spacing:-0.12px;">0</div>
<div class="t g" style="left:1260px;top:286px;color:#6e6e6e;letter-spacing:-0.12px;">0</div>
<svg style="left:1370px;top:286px;" width="15" height="14" viewBox="0 0 15 14"><rect x="0" y="0" width="15" height="14" rx="1" fill="#fff" opacity="0.900"/><rect x="1" y="1" width="13" height="12" fill="#3c3c3c"/><rect x="1" y="3" width="13" height="0.600" fill="#6a6a6a"/><rect x="2" y="4" width="3" height="2" fill="#fff"/><rect x="6" y="4" width="3" height="2" fill="#fff"/><rect x="10" y="4" width="3" height="2" fill="#fff"/><rect x="2" y="7" width="3" height="2" fill="#fff"/><rect x="6" y="7" width="3" height="2" fill="#fff"/><rect x="10" y="7" width="3" height="2" fill="#fff"/><rect x="2" y="10" width="3" height="2" fill="#fff"/><rect x="6" y="10" width="3" height="2" fill="#fff"/><rect x="10" y="10" width="3" height="2" fill="#fff"/></svg>
<div class="t g" style="left:1388px;top:286px;letter-spacing:-0.07px;">ShortInfoRunJobs</div>
<div class="t g" style="left:1876px;top:286px;letter-spacing:0.11px;">srv</div>
<div style="left:300px;top:304px;width:1613px;height:28px;background:#e3e3e3;"></div>
<svg style="left:309px;top:314px;" width="7" height="10" viewBox="0 0 7 10"><path d="M0.600 0.800v8l4.800-4z" fill="#fff" stroke="#555" stroke-width="1"/></svg>
<svg style="left:330px;top:314px;" width="12" height="9" viewBox="0 0 12 9"><rect x="0" y="0" width="12" height="8.400" rx="1.500" fill="#fff" opacity="0.850"/><rect x="1.100" y="1.400" width="9.800" height="1.900" fill="#2b2b2b"/><rect x="1.100" y="5.200" width="9.800" height="1.900" fill="#2b2b2b"/></svg>
<div class="t g" style="left:351px;top:311px;font-weight:bold;color:#0b6fcc;font-size:11.500px;letter-spacing:0.15px;">Equal (44)</div>
<svg style="left:1098px;top:452px;" width="18" height="6" viewBox="0 0 18 6"><rect x="0" y="0" width="1" height="1" fill="#707074"/><rect x="0" y="4" width="1" height="1" fill="#707074"/><rect x="2" y="2" width="1" height="1" fill="#707074"/><rect x="4" y="0" width="1" height="1" fill="#707074"/><rect x="4" y="4" width="1" height="1" fill="#707074"/><rect x="6" y="2" width="1" height="1" fill="#707074"/><rect x="8" y="0" width="1" height="1" fill="#707074"/><rect x="8" y="4" width="1" height="1" fill="#707074"/><rect x="10" y="2" width="1" height="1" fill="#707074"/><rect x="12" y="0" width="1" height="1" fill="#707074"/><rect x="12" y="4" width="1" height="1" fill="#707074"/><rect x="14" y="2" width="1" height="1" fill="#707074"/><rect x="16" y="0" width="1" height="1" fill="#707074"/><rect x="16" y="4" width="1" height="1" fill="#707074"/></svg>
<!-- main2 -->
<svg style="left:300px;top:460px;" width="90" height="30" viewBox="300 460 90 30"><circle cx="316.700" cy="474.400" r="3.300" stroke="#3c3c3c" stroke-width="1.100" fill="none"/><path d="M314.300 477l-3.700 4" stroke="#3c3c3c" stroke-width="1.500" fill="none"/><path d="M309.900 471.600h2.800M308.900 473.700h2.900M307.800 476.900h2.800M306.100 479.400h3.400" stroke="#3c3c3c" stroke-width="0.900" fill="none"/><rect x="335.600" y="469.600" width="11.800" height="11.700" fill="#fbfbfb" stroke="#3c3c3c" stroke-width="1.100"/><rect x="335.100" y="469.100" width="4.300" height="12.700" fill="#3c3c3c"/><rect x="343.300" y="469.600" width="1" height="11.700" fill="#3c3c3c"/><rect x="357" y="464" width="24" height="24" fill="#007acc"/><rect x="367.300" y="468.200" width="9.700" height="15.800" fill="#f6f6f6"/><circle cx="365.300" cy="474.400" r="3.300" fill="#f6f6f6"/><rect x="364" y="476" width="5" height="8" fill="#f6f6f6"/><rect x="368.900" y="469.900" width="6.600" height="12.600" fill="#fbfbfb" stroke="#3c3c3c" stroke-width="1.100"/><rect x="368.400" y="469.300" width="7.600" height="1.600" fill="#3c3c3c"/><path d="M368.500 474.400h7.400M368.500 478.400h7.400" stroke="#3c3c3c" stroke-width="1"/><circle cx="365.300" cy="474.400" r="2.100" fill="#f0f0f0" stroke="#3c3c3c" stroke-width="1.100"/><path d="M365.300 476.500v6.300M365.300 479.600h2.400M365.300 481.700h2.400" stroke="#3c3c3c" stroke-width="1.100" fill="none"/></svg>
<div class="t g" style="left:1019.7px;top:469px;letter-spacing:0.21px;">srv.Defrag</div>
<svg style="left:1076px;top:469px;" width="15" height="14" viewBox="0 0 15 14"><rect x="0" y="0" width="15" height="14" rx="1" fill="#fff" opacity="0.900"/><rect x="1" y="1" width="13" height="12" fill="#3c3c3c"/><rect x="1" y="3" width="13" height="0.600" fill="#6a6a6a"/><rect x="2" y="4" width="3" height="2" fill="#fff"/><rect x="6" y="4" width="3" height="2" fill="#fff"/><rect x="10" y="4" width="3" height="2" fill="#fff"/><rect x="2" y="7" width="3" height="2" fill="#fff"/><rect x="6" y="7" width="3" height="2" fill="#fff"/><rect x="10" y="7" width="3" height="2" fill="#fff"/><rect x="2" y="10" width="3" height="2" fill="#fff"/><rect x="6" y="10" width="3" height="2" fill="#fff"/><rect x="10" y="10" width="3" height="2" fill="#fff"/></svg>
<svg style="left:1099.7px;top:470.9px;" width="14" height="11" viewBox="0 0 14 11"><rect x="0" y="0" width="14" height="11" rx="1.500" fill="#fff" opacity="0.850"/><rect x="1.200" y="1" width="2.300" height="5.200" fill="#a01000"/><rect x="1.200" y="7.200" width="2.300" height="1.900" fill="#a01000"/><rect x="4.600" y="2.300" width="8.200" height="1.800" fill="#2b2b2b"/><rect x="4.600" y="6" width="8.200" height="1.800" fill="#2b2b2b"/></svg>
<svg style="left:1124px;top:469px;" width="15" height="14" viewBox="0 0 15 14"><rect x="0" y="0" width="15" height="14" rx="1" fill="#fff" opacity="0.900"/><rect x="1" y="1" width="13" height="12" fill="#3c3c3c"/><rect x="1" y="3" width="13" height="0.600" fill="#6a6a6a"/><rect x="2" y="4" width="3" height="2" fill="#fff"/><rect x="6" y="4" width="3" height="2" fill="#fff"/><rect x="10" y="4" width="3" height="2" fill="#fff"/><rect x="2" y="7" width="3" height="2" fill="#fff"/><rect x="6" y="7" width="3" height="2" fill="#fff"/><rect x="10" y="7" width="3" height="2" fill="#fff"/><rect x="2" y="10" width="3" height="2" fill="#fff"/><rect x="6" y="10" width="3" height="2" fill="#fff"/><rect x="10" y="10" width="3" height="2" fill="#fff"/></svg>
<div class="t g" style="left:1142px;top:469px;letter-spacing:0.21px;">srv.Defrag</div>
<svg style="left:1864px;top:470px;" width="13" height="12" viewBox="0 0 13 12"><rect x="0.500" y="0.500" width="12" height="11" fill="#fbfbfb" stroke="#3c3c3c" stroke-width="1"/><rect x="0" y="0" width="13" height="2.400" fill="#3c3c3c"/><rect x="6" y="2" width="1" height="10" fill="#3c3c3c"/><path d="M2 4.500h3M2 6.500h3M2 8.500h3M8 4.500h3M8 6.500h3M8 8.500h3" stroke="#3c3c3c" stroke-width="1"/></svg>
<svg style="left:1897px;top:474px;" width="8" height="4" viewBox="0 0 8 4"><path d="M0 0h8l-4 4z" fill="#1e1e1e"/></svg>
<div style="left:299px;top:517px;width:1615px;height:430px;background:#ffffff;border:1px solid #cdd0e0;"></div>
<div style="left:1914px;top:517px;width:1px;height:430px;background:#cdd0e0;"></div>
<div style="left:300px;top:518px;width:1597px;height:30px;background:#fcfcfc;"></div>
<div style="left:300px;top:548px;width:1597px;height:1px;background:#cdd0e0;"></div>
<div style="left:319px;top:549px;width:1262px;height:20px;background:#eeeef2;"></div>
<div style="left:319px;top:569px;width:1262px;height:1px;background:#cdd0e0;"></div>
<div style="left:319px;top:590px;width:1262px;height:1px;background:#cdd0e0;"></div>
<div style="left:319px;top:611px;width:1262px;height:1px;background:#cdd0e0;"></div>
<div style="left:319px;top:632px;width:1262px;height:1px;background:#cdd0e0;"></div>
<div style="left:319px;top:653px;width:1262px;height:1px;background:#cdd0e0;"></div>
<div style="left:319px;top:674px;width:1262px;height:1px;background:#cdd0e0;"></div>
<div style="left:319px;top:695px;width:1262px;height:1px;background:#cdd0e0;"></div>
<div style="left:319px;top:716px;width:1262px;height:1px;background:#cdd0e0;"></div>
<div style="left:319px;top:737px;width:1262px;height:1px;background:#cdd0e0;"></div>
<div style="left:319px;top:758px;width:1262px;height:1px;background:#cdd0e0;"></div>
<div style="left:319px;top:779px;width:1262px;height:1px;background:#cdd0e0;"></div>
<div style="left:319px;top:800px;width:1262px;height:1px;background:#cdd0e0;"></div>
<div style="left:319px;top:821px;width:1262px;height:1px;background:#cdd0e0;"></div>
<div style="left:319px;top:842px;width:1262px;height:1px;background:#cdd0e0;"></div>
<div style="left:319px;top:863px;width:1262px;height:1px;background:#cdd0e0;"></div>
<div style="left:319px;top:884px;width:1262px;height:1px;background:#cdd0e0;"></div>
<div style="left:319px;top:905px;width:1262px;height:1px;background:#cdd0e0;"></div>
<div style="left:319px;top:926px;width:1262px;height:1px;background:#cdd0e0;"></div>
<div style="left:318px;top:518px;width:1px;height:409px;background:#cdd0e0;"></div>
<div style="left:343px;top:518px;width:1px;height:409px;background:#cdd0e0;"></div>
<div style="left:383px;top:518px;width:2px;height:409px;background:#cdd0e0;"></div>
<div style="left:448px;top:518px;width:1px;height:409px;background:#cdd0e0;"></div>
<div style="left:497px;top:518px;width:1px;height:409px;background:#cdd0e0;"></div>
<div style="left:686px;top:518px;width:1px;height:409px;background:#cdd0e0;"></div>
<div style="left:909px;top:518px;width:1px;height:409px;background:#cdd0e0;"></div>
<div style="left:963px;top:518px;width:1px;height:409px;background:#cdd0e0;"></div>
<div style="left:1004px;top:518px;width:1px;height:409px;background:#cdd0e0;"></div>
<div style="left:1044px;top:518px;width:1px;height:409px;background:#cdd0e0;"></div>
<div style="left:1085px;top:518px;width:1px;height:409px;background:#cdd0e0;"></div>
<div style="left:1195px;top:518px;width:1px;height:409px;background:#cdd0e0;"></div>
<div style="left:1305px;top:518px;width:1px;height:409px;background:#cdd0e0;"></div>
<div style="left:1363px;top:518px;width:1px;height:409px;background:#cdd0e0;"></div>
<div style="left:1430px;top:518px;width:1px;height:409px;background:#cdd0e0;"></div>
<div style="left:1470px;top:518px;width:1px;height:409px;background:#cdd0e0;"></div>
<div style="left:1580px;top:518px;width:1px;height:409px;background:#cdd0e0;"></div>
<svg style="left:325px;top:528px;" width="13" height="13" viewBox="0 0 13 13"><rect x="0.500" y="0.500" width="12" height="12" fill="#fff" stroke="#cdd0e0" stroke-width="1"/><path d="M2.800 6.800l2.600 2.700 5-6.300" stroke="#666" stroke-width="1.700" fill="none"/></svg>
<div class="t g" style="left:346.6px;top:520px;">ID</div>
<div class="t s" style="left:347.3px;top:534.2px;letter-spacing:0.13px;">bigint</div>
<div class="t g" style="left:387.6px;top:520px;letter-spacing:-0.12px;">db</div>
<div class="t s" style="left:388.3px;top:534.2px;letter-spacing:0.22px;">nvarchar</div>
<div class="t g" style="left:451.6px;top:520px;letter-spacing:-0.41px;">shema</div>
<div class="t s" style="left:452.3px;top:534.2px;letter-spacing:0.22px;">nvarchar</div>
<div class="t g" style="left:500.6px;top:520px;letter-spacing:0.03px;">table</div>
<div class="t s" style="left:501.3px;top:534.2px;letter-spacing:0.22px;">nvarchar</div>
<div class="t g" style="left:689.6px;top:520px;letter-spacing:-0.14px;">IndexName</div>
<div class="t s" style="left:690.3px;top:534.2px;letter-spacing:0.22px;">nvarchar</div>
<div class="t g" style="left:912.6px;top:520px;letter-spacing:-0.06px;">frag_num</div>
<div class="t s" style="left:913.3px;top:534.2px;letter-spacing:-0.32px;">int</div>
<div class="t g" style="left:966.6px;top:520px;letter-spacing:0.26px;">frag</div>
<div class="t s" style="left:967.3px;top:534.2px;letter-spacing:-0.21px;">decimal</div>
<div class="t g" style="left:1007.6px;top:520px;letter-spacing:-0.12px;">page</div>
<div class="t s" style="left:1008.3px;top:534.2px;letter-spacing:-0.32px;">int</div>
<div class="t g" style="left:1047.6px;top:520px;letter-spacing:-0.09px;">rec</div>
<div class="t s" style="left:1048.3px;top:534.2px;letter-spacing:-0.32px;">int</div>
<div class="t g" style="left:1088.6px;top:520px;letter-spacing:0.22px;">ts</div>
<div class="t s" style="left:1089.3px;top:534.2px;letter-spacing:-0.17px;">datetime</div>
<div class="t g" style="left:1198.6px;top:520px;letter-spacing:0.94px;">tf</div>
<div class="t s" style="left:1199.3px;top:534.2px;letter-spacing:-0.17px;">datetime</div>
<div class="t g" style="left:1308.6px;top:520px;letter-spacing:0.29px;">frag_after</div>
<div class="t s" style="left:1309.3px;top:534.2px;letter-spacing:-0.21px;">decimal</div>
<div class="t g" style="left:1366.6px;top:520px;">object_id</div>
<div class="t s" style="left:1367.3px;top:534.2px;letter-spacing:-0.32px;">int</div>
<div class="t g" style="left:1433.6px;top:520px;letter-spacing:-0.02px;">idx</div>
<div class="t s" style="left:1434.3px;top:534.2px;letter-spacing:-0.32px;">int</div>
<div class="t g" style="left:1473.6px;top:520px;letter-spacing:-0.10px;">InsertUTCDate</div>
<div class="t s" style="left:1474.3px;top:534.2px;letter-spacing:-0.17px;">datetime</div>
<svg style="left:308px;top:556px;" width="5" height="8" viewBox="0 0 5 8"><path d="M0 0v8l4.500-4z" fill="#555"/></svg>
<svg style="left:325px;top:552px;" width="13" height="13" viewBox="0 0 13 13"><rect x="0.500" y="0.500" width="12" height="12" fill="#fff" stroke="#cdd0e0" stroke-width="1"/><path d="M2.800 6.800l2.600 2.700 5-6.300" stroke="#666" stroke-width="1.700" fill="none"/></svg>
<div class="t g" style="left:357.5px;top:552px;letter-spacing:-0.12px;">7251</div>
<div class="t g" style="left:387.4px;top:552px;letter-spacing:-0.48px;">msdb</div>
<div class="t g" style="left:451.4px;top:552px;letter-spacing:-0.12px;">dbo</div>
<div class="t g" style="left:500.4px;top:552px;letter-spacing:0.03px;">sysjobhistory</div>
<div class="t g" style="left:689.4px;top:552px;letter-spacing:-0.12px;">clust</div>
<div class="t g" style="left:948.5px;top:552px;letter-spacing:-0.12px;">18</div>
<div class="t g" style="left:974.1px;top:552px;letter-spacing:-0.03px;">10.59</div>
<div class="t g" style="left:1029.5px;top:552px;letter-spacing:-0.12px;">85</div>
<div class="t g" style="left:1059px;top:552px;font-style:italic;letter-spacing:-0.08px;">(null)</div>
<div class="t g" style="left:1089px;top:552px;letter-spacing:0.06px;">19.03.2019 21:57:01</div>
<div class="t g" style="left:1199px;top:552px;letter-spacing:0.06px;">19.03.2019 21:57:07</div>
<div class="t g" style="left:1339.1px;top:552px;">1.28</div>
<div class="t g" style="left:1367.5px;top:552px;letter-spacing:-0.12px;">1077578877</div>
<div class="t g" style="left:1461.5px;top:552px;letter-spacing:-0.12px;">1</div>
<div class="t g" style="left:1474px;top:552px;letter-spacing:0.06px;">19.03.2019 18:57:07</div>
<svg style="left:325px;top:573px;" width="13" height="13" viewBox="0 0 13 13"><rect x="0.500" y="0.500" width="12" height="12" fill="#fff" stroke="#cdd0e0" stroke-width="1"/><path d="M2.800 6.800l2.600 2.700 5-6.300" stroke="#666" stroke-width="1.700" fill="none"/></svg>
<div class="t g" style="left:357.5px;top:573px;letter-spacing:-0.12px;">7252</div>
<div class="t g" style="left:387.4px;top:573px;letter-spacing:-0.48px;">msdb</div>
<div class="t g" style="left:451.4px;top:573px;letter-spacing:-0.12px;">dbo</div>
<div class="t g" style="left:500.4px;top:573px;letter-spacing:-0.22px;">backupmediaset</div>
<div class="t g" style="left:689.4px;top:573px;letter-spacing:-0.22px;">backupmediasetuuid</div>
<div class="t g" style="left:942.5px;top:573px;letter-spacing:-0.12px;">582</div>
<div class="t g" style="left:974.1px;top:573px;letter-spacing:-0.03px;">98.47</div>
<div class="t g" style="left:1023.5px;top:573px;letter-spacing:-0.12px;">587</div>
<div class="t g" style="left:1059px;top:573px;font-style:italic;letter-spacing:-0.08px;">(null)</div>
<div class="t g" style="left:1089px;top:573px;letter-spacing:0.06px;">19.03.2019 21:57:01</div>
<div class="t g" style="left:1199px;top:573px;letter-spacing:0.06px;">19.03.2019 21:57:07</div>
<div class="t g" style="left:1339.1px;top:573px;">1.00</div>
<div class="t g" style="left:1367.5px;top:573px;letter-spacing:-0.12px;">1243151474</div>
<div class="t g" style="left:1461.5px;top:573px;letter-spacing:-0.12px;">2</div>
<div class="t g" style="left:1474px;top:573px;letter-spacing:0.06px;">19.03.2019 18:57:07</div>
<svg style="left:325px;top:594px;" width="13" height="13" viewBox="0 0 13 13"><rect x="0.500" y="0.500" width="12" height="12" fill="#fff" stroke="#cdd0e0" stroke-width="1"/><path d="M2.800 6.800l2.600 2.700 5-6.300" stroke="#666" stroke-width="1.700" fill="none"/></svg>
<div class="t g" style="left:357.5px;top:594px;letter-spacing:-0.12px;">7253</div>
<div class="t g" style="left:387.4px;top:594px;letter-spacing:-0.48px;">msdb</div>
<div class="t g" style="left:451.4px;top:594px;letter-spacing:-0.12px;">dbo</div>
<div class="t g" style="left:500.4px;top:594px;letter-spacing:-0.24px;">backupmediafamily</div>
<div class="t g" style="left:689.4px;top:594px;letter-spacing:-0.24px;">backupmediafamilyuuid</div>
<div class="t g" style="left:942.5px;top:594px;letter-spacing:-0.12px;">613</div>
<div class="t g" style="left:974.1px;top:594px;letter-spacing:-0.03px;">98.23</div>
<div class="t g" style="left:1023.5px;top:594px;letter-spacing:-0.12px;">621</div>
<div class="t g" style="left:1059px;top:594px;font-style:italic;letter-spacing:-0.08px;">(null)</div>
<div class="t g" style="left:1089px;top:594px;letter-spacing:0.06px;">19.03.2019 21:57:01</div>
<div class="t g" style="left:1199px;top:594px;letter-spacing:0.06px;">19.03.2019 21:57:07</div>
<div class="t g" style="left:1339.1px;top:594px;">1.25</div>
<div class="t g" style="left:1367.5px;top:594px;letter-spacing:-0.12px;">1275151588</div>
<div class="t g" style="left:1461.5px;top:594px;letter-spacing:-0.12px;">2</div>
<div class="t g" style="left:1474px;top:594px;letter-spacing:0.06px;">19.03.2019 18:57:07</div>
<svg style="left:325px;top:615px;" width="13" height="13" viewBox="0 0 13 13"><rect x="0.500" y="0.500" width="12" height="12" fill="#fff" stroke="#cdd0e0" stroke-width="1"/><path d="M2.800 6.800l2.600 2.700 5-6.300" stroke="#666" stroke-width="1.700" fill="none"/></svg>
<div class="t g" style="left:357.5px;top:615px;letter-spacing:-0.12px;">7254</div>
<div class="t g" style="left:387.4px;top:615px;letter-spacing:-0.48px;">msdb</div>
<div class="t g" style="left:451.4px;top:615px;letter-spacing:-0.12px;">dbo</div>
<div class="t g" style="left:500.4px;top:615px;letter-spacing:-0.13px;">backupset</div>
<div class="t g" style="left:689.4px;top:615px;letter-spacing:-0.15px;">backupsetuuid</div>
<div class="t g" style="left:942.5px;top:615px;letter-spacing:-0.12px;">585</div>
<div class="t g" style="left:974.1px;top:615px;letter-spacing:-0.03px;">98.47</div>
<div class="t g" style="left:1023.5px;top:615px;letter-spacing:-0.12px;">588</div>
<div class="t g" style="left:1059px;top:615px;font-style:italic;letter-spacing:-0.08px;">(null)</div>
<div class="t g" style="left:1089px;top:615px;letter-spacing:0.06px;">19.03.2019 21:57:01</div>
<div class="t g" style="left:1199px;top:615px;letter-spacing:0.06px;">19.03.2019 21:57:07</div>
<div class="t g" style="left:1339.1px;top:615px;">0.99</div>
<div class="t g" style="left:1367.5px;top:615px;letter-spacing:-0.12px;">1339151816</div>
<div class="t g" style="left:1461.5px;top:615px;letter-spacing:-0.12px;">2</div>
<div class="t g" style="left:1474px;top:615px;letter-spacing:0.06px;">19.03.2019 18:57:07</div>
<svg style="left:325px;top:636px;" width="13" height="13" viewBox="0 0 13 13"><rect x="0.500" y="0.500" width="12" height="12" fill="#fff" stroke="#cdd0e0" stroke-width="1"/><path d="M2.800 6.800l2.600 2.700 5-6.300" stroke="#666" stroke-width="1.700" fill="none"/></svg>
<div class="t g" style="left:357.5px;top:636px;letter-spacing:-0.12px;">7255</div>
<div class="t g" style="left:387.4px;top:636px;letter-spacing:-0.29px;">JiraSDFortis</div>
<div class="t g" style="left:451.4px;top:636px;letter-spacing:-0.12px;">dbo</div>
<div class="t g" style="left:500.4px;top:636px;letter-spacing:-0.08px;">audit_changed_value</div>
<div class="t g" style="left:689.4px;top:636px;letter-spacing:-0.14px;">idx_changed_value_log_id</div>
<div class="t g" style="left:954.5px;top:636px;letter-spacing:-0.12px;">4</div>
<div class="t g" style="left:974.1px;top:636px;letter-spacing:-0.03px;">20.00</div>
<div class="t g" style="left:1029.5px;top:636px;letter-spacing:-0.12px;">15</div>
<div class="t g" style="left:1059px;top:636px;font-style:italic;letter-spacing:-0.08px;">(null)</div>
<div class="t g" style="left:1089px;top:636px;letter-spacing:0.06px;">19.03.2019 21:57:07</div>
<div class="t g" style="left:1199px;top:636px;letter-spacing:0.06px;">19.03.2019 21:57:07</div>
<div class="t g" style="left:1333.1px;top:636px;letter-spacing:-0.03px;">20.00</div>
<div class="t g" style="left:1373.5px;top:636px;letter-spacing:-0.12px;">341576255</div>
<div class="t g" style="left:1461.5px;top:636px;letter-spacing:-0.12px;">2</div>
<div class="t g" style="left:1474px;top:636px;letter-spacing:0.06px;">19.03.2019 18:57:07</div>
<svg style="left:325px;top:657px;" width="13" height="13" viewBox="0 0 13 13"><rect x="0.500" y="0.500" width="12" height="12" fill="#fff" stroke="#cdd0e0" stroke-width="1"/><path d="M2.800 6.800l2.600 2.700 5-6.300" stroke="#666" stroke-width="1.700" fill="none"/></svg>
<div class="t g" style="left:357.5px;top:657px;letter-spacing:-0.12px;">7256</div>
<div class="t g" style="left:387.4px;top:657px;letter-spacing:-0.29px;">JiraSDFortis</div>
<div class="t g" style="left:451.4px;top:657px;letter-spacing:-0.12px;">dbo</div>
<div class="t g" style="left:500.4px;top:657px;letter-spacing:-0.08px;">audit_item</div>
<div class="t g" style="left:689.4px;top:657px;letter-spacing:-0.12px;">idx_audit_item_log_id2</div>
<div class="t g" style="left:954.5px;top:657px;letter-spacing:-0.12px;">8</div>
<div class="t g" style="left:974.1px;top:657px;letter-spacing:-0.03px;">29.41</div>
<div class="t g" style="left:1029.5px;top:657px;letter-spacing:-0.12px;">17</div>
<div class="t g" style="left:1059px;top:657px;font-style:italic;letter-spacing:-0.08px;">(null)</div>
<div class="t g" style="left:1089px;top:657px;letter-spacing:0.06px;">19.03.2019 21:57:07</div>
<div class="t g" style="left:1199px;top:657px;letter-spacing:0.06px;">19.03.2019 21:57:07</div>
<div class="t g" style="left:1333.1px;top:657px;letter-spacing:-0.03px;">29.41</div>
<div class="t g" style="left:1373.5px;top:657px;letter-spacing:-0.12px;">373576369</div>
<div class="t g" style="left:1461.5px;top:657px;letter-spacing:-0.12px;">2</div>
<div class="t g" style="left:1474px;top:657px;letter-spacing:0.06px;">19.03.2019 18:57:07</div>
<svg style="left:325px;top:678px;" width="13" height="13" viewBox="0 0 13 13"><rect x="0.500" y="0.500" width="12" height="12" fill="#fff" stroke="#cdd0e0" stroke-width="1"/><path d="M2.800 6.800l2.600 2.700 5-6.300" stroke="#666" stroke-width="1.700" fill="none"/></svg>
<div class="t g" style="left:357.5px;top:678px;letter-spacing:-0.12px;">7257</div>
<div class="t g" style="left:387.4px;top:678px;letter-spacing:-0.29px;">JiraSDFortis</div>
<div class="t g" style="left:451.4px;top:678px;letter-spacing:-0.12px;">dbo</div>
<div class="t g" style="left:500.4px;top:678px;letter-spacing:-0.07px;">audit_log</div>
<div class="t g" style="left:689.4px;top:678px;letter-spacing:-0.03px;">idx_audit_log_created</div>
<div class="t g" style="left:954.5px;top:678px;letter-spacing:-0.12px;">8</div>
<div class="t g" style="left:974.1px;top:678px;letter-spacing:-0.03px;">26.09</div>
<div class="t g" style="left:1029.5px;top:678px;letter-spacing:-0.12px;">23</div>
<div class="t g" style="left:1059px;top:678px;font-style:italic;letter-spacing:-0.08px;">(null)</div>
<div class="t g" style="left:1089px;top:678px;letter-spacing:0.06px;">19.03.2019 21:57:07</div>
<div class="t g" style="left:1199px;top:678px;letter-spacing:0.06px;">19.03.2019 21:57:07</div>
<div class="t g" style="left:1333.1px;top:678px;letter-spacing:-0.03px;">26.09</div>
<div class="t g" style="left:1373.5px;top:678px;letter-spacing:-0.12px;">405576483</div>
<div class="t g" style="left:1461.5px;top:678px;letter-spacing:-0.12px;">2</div>
<div class="t g" style="left:1474px;top:678px;letter-spacing:0.06px;">19.03.2019 18:57:07</div>
<svg style="left:325px;top:699px;" width="13" height="13" viewBox="0 0 13 13"><rect x="0.500" y="0.500" width="12" height="12" fill="#fff" stroke="#cdd0e0" stroke-width="1"/><path d="M2.800 6.800l2.600 2.700 5-6.300" stroke="#666" stroke-width="1.700" fill="none"/></svg>
<div class="t g" style="left:357.5px;top:699px;letter-spacing:-0.12px;">7258</div>
<div class="t g" style="left:387.4px;top:699px;letter-spacing:-0.29px;">JiraSDFortis</div>
<div class="t g" style="left:451.4px;top:699px;letter-spacing:-0.12px;">dbo</div>
<div class="t g" style="left:500.4px;top:699px;letter-spacing:-0.56px;">AO_9B2E3B_THEN_ACT_CONF_DATA</div>
<div class="t g" style="left:689.4px;top:699px;letter-spacing:-0.49px;">pk_AO_9B2E3B_THEN_ACT_CONF_DATA_ID</div>
<div class="t g" style="left:954.5px;top:699px;letter-spacing:-0.12px;">4</div>
<div class="t g" style="left:974.1px;top:699px;letter-spacing:-0.03px;">20.00</div>
<div class="t g" style="left:1029.5px;top:699px;letter-spacing:-0.12px;">10</div>
<div class="t g" style="left:1059px;top:699px;font-style:italic;letter-spacing:-0.08px;">(null)</div>
<div class="t g" style="left:1089px;top:699px;letter-spacing:0.06px;">19.03.2019 21:57:07</div>
<div class="t g" style="left:1199px;top:699px;letter-spacing:0.06px;">19.03.2019 21:57:07</div>
<div class="t g" style="left:1333.1px;top:699px;letter-spacing:-0.03px;">20.00</div>
<div class="t g" style="left:1367.5px;top:699px;letter-spacing:-0.12px;">1988202133</div>
<div class="t g" style="left:1461.5px;top:699px;letter-spacing:-0.12px;">1</div>
<div class="t g" style="left:1474px;top:699px;letter-spacing:0.06px;">19.03.2019 18:57:07</div>
<svg style="left:325px;top:720px;" width="13" height="13" viewBox="0 0 13 13"><rect x="0.500" y="0.500" width="12" height="12" fill="#fff" stroke="#cdd0e0" stroke-width="1"/><path d="M2.800 6.800l2.600 2.700 5-6.300" stroke="#666" stroke-width="1.700" fill="none"/></svg>
<div class="t g" style="left:357.5px;top:720px;letter-spacing:-0.12px;">7259</div>
<div class="t g" style="left:387.4px;top:720px;letter-spacing:-0.18px;">Jira</div>
<div class="t g" style="left:451.4px;top:720px;letter-spacing:-0.12px;">dbo</div>
<div class="t g" style="left:500.4px;top:720px;letter-spacing:-0.35px;">issuelink</div>
<div class="t g" style="left:689.4px;top:720px;letter-spacing:-0.31px;">issuelink_src</div>
<div class="t g" style="left:948.5px;top:720px;letter-spacing:-0.12px;">42</div>
<div class="t g" style="left:974.1px;top:720px;letter-spacing:-0.03px;">20.28</div>
<div class="t g" style="left:1023.5px;top:720px;letter-spacing:-0.12px;">143</div>
<div class="t g" style="left:1059px;top:720px;font-style:italic;letter-spacing:-0.08px;">(null)</div>
<div class="t g" style="left:1089px;top:720px;letter-spacing:0.06px;">19.03.2019 21:57:07</div>
<div class="t g" style="left:1199px;top:720px;letter-spacing:0.06px;">19.03.2019 21:57:35</div>
<div class="t g" style="left:1339.1px;top:720px;">0.79</div>
<div class="t g" style="left:1379.5px;top:720px;letter-spacing:-0.12px;">50099219</div>
<div class="t g" style="left:1461.5px;top:720px;letter-spacing:-0.12px;">2</div>
<div class="t g" style="left:1474px;top:720px;letter-spacing:0.06px;">19.03.2019 18:57:35</div>
<svg style="left:325px;top:741px;" width="13" height="13" viewBox="0 0 13 13"><rect x="0.500" y="0.500" width="12" height="12" fill="#fff" stroke="#cdd0e0" stroke-width="1"/><path d="M2.800 6.800l2.600 2.700 5-6.300" stroke="#666" stroke-width="1.700" fill="none"/></svg>
<div class="t g" style="left:357.5px;top:741px;letter-spacing:-0.12px;">7260</div>
<div class="t g" style="left:387.4px;top:741px;letter-spacing:-0.18px;">Jira</div>
<div class="t g" style="left:451.4px;top:741px;letter-spacing:-0.12px;">dbo</div>
<div class="t g" style="left:500.4px;top:741px;letter-spacing:-0.35px;">issuelink</div>
<div class="t g" style="left:689.4px;top:741px;letter-spacing:-0.22px;">issuelink_dest</div>
<div class="t g" style="left:948.5px;top:741px;letter-spacing:-0.12px;">38</div>
<div class="t g" style="left:974.1px;top:741px;letter-spacing:-0.03px;">19.85</div>
<div class="t g" style="left:1023.5px;top:741px;letter-spacing:-0.12px;">131</div>
<div class="t g" style="left:1059px;top:741px;font-style:italic;letter-spacing:-0.08px;">(null)</div>
<div class="t g" style="left:1089px;top:741px;letter-spacing:0.06px;">19.03.2019 21:57:07</div>
<div class="t g" style="left:1199px;top:741px;letter-spacing:0.06px;">19.03.2019 21:57:35</div>
<div class="t g" style="left:1339.1px;top:741px;">0.00</div>
<div class="t g" style="left:1379.5px;top:741px;letter-spacing:-0.12px;">50099219</div>
<div class="t g" style="left:1461.5px;top:741px;letter-spacing:-0.12px;">3</div>
<div class="t g" style="left:1474px;top:741px;letter-spacing:0.06px;">19.03.2019 18:57:35</div>
<svg style="left:325px;top:762px;" width="13" height="13" viewBox="0 0 13 13"><rect x="0.500" y="0.500" width="12" height="12" fill="#fff" stroke="#cdd0e0" stroke-width="1"/><path d="M2.800 6.800l2.600 2.700 5-6.300" stroke="#666" stroke-width="1.700" fill="none"/></svg>
<div class="t g" style="left:357.5px;top:762px;letter-spacing:-0.12px;">7261</div>
<div class="t g" style="left:387.4px;top:762px;letter-spacing:-0.18px;">Jira</div>
<div class="t g" style="left:451.4px;top:762px;letter-spacing:-0.12px;">dbo</div>
<div class="t g" style="left:500.4px;top:762px;letter-spacing:-0.61px;">AO_2FC5DA_SCRIPT_EXECUTION</div>
<div class="t g" style="left:689.4px;top:762px;letter-spacing:-0.09px;">index_ao_2fc5da_scr395268290</div>
<div class="t g" style="left:954.5px;top:762px;letter-spacing:-0.12px;">6</div>
<div class="t g" style="left:974.1px;top:762px;letter-spacing:-0.03px;">55.56</div>
<div class="t g" style="left:1035.5px;top:762px;letter-spacing:-0.12px;">9</div>
<div class="t g" style="left:1059px;top:762px;font-style:italic;letter-spacing:-0.08px;">(null)</div>
<div class="t g" style="left:1089px;top:762px;letter-spacing:0.06px;">19.03.2019 21:57:07</div>
<div class="t g" style="left:1199px;top:762px;letter-spacing:0.06px;">19.03.2019 21:57:35</div>
<div class="t g" style="left:1339.1px;top:762px;">0.00</div>
<div class="t g" style="left:1379.5px;top:762px;">59199311</div>
<div class="t g" style="left:1461.5px;top:762px;letter-spacing:-0.12px;">4</div>
<div class="t g" style="left:1474px;top:762px;letter-spacing:0.06px;">19.03.2019 18:57:35</div>
<svg style="left:325px;top:783px;" width="13" height="13" viewBox="0 0 13 13"><rect x="0.500" y="0.500" width="12" height="12" fill="#fff" stroke="#cdd0e0" stroke-width="1"/><path d="M2.800 6.800l2.600 2.700 5-6.300" stroke="#666" stroke-width="1.700" fill="none"/></svg>
<div class="t g" style="left:357.5px;top:783px;letter-spacing:-0.12px;">7262</div>
<div class="t g" style="left:387.4px;top:783px;letter-spacing:-0.18px;">Jira</div>
<div class="t g" style="left:451.4px;top:783px;letter-spacing:-0.12px;">dbo</div>
<div class="t g" style="left:500.4px;top:783px;letter-spacing:-0.57px;">AO_6B32B3_ISSUE_TO_PR</div>
<div class="t g" style="left:689.4px;top:783px;letter-spacing:-0.15px;">index_ao_6b32b3_iss1659734399</div>
<div class="t g" style="left:954.5px;top:783px;letter-spacing:-0.12px;">7</div>
<div class="t g" style="left:974.1px;top:783px;letter-spacing:-0.03px;">75.00</div>
<div class="t g" style="left:1035.5px;top:783px;letter-spacing:-0.12px;">8</div>
<div class="t g" style="left:1059px;top:783px;font-style:italic;letter-spacing:-0.08px;">(null)</div>
<div class="t g" style="left:1089px;top:783px;letter-spacing:0.06px;">19.03.2019 21:57:07</div>
<div class="t g" style="left:1199px;top:783px;letter-spacing:0.06px;">19.03.2019 21:57:35</div>
<div class="t g" style="left:1333.1px;top:783px;letter-spacing:-0.03px;">20.00</div>
<div class="t g" style="left:1373.5px;top:783px;letter-spacing:-0.12px;">219199881</div>
<div class="t g" style="left:1461.5px;top:783px;letter-spacing:-0.12px;">2</div>
<div class="t g" style="left:1474px;top:783px;letter-spacing:0.06px;">19.03.2019 18:57:35</div>
<svg style="left:325px;top:804px;" width="13" height="13" viewBox="0 0 13 13"><rect x="0.500" y="0.500" width="12" height="12" fill="#fff" stroke="#cdd0e0" stroke-width="1"/><path d="M2.800 6.800l2.600 2.700 5-6.300" stroke="#666" stroke-width="1.700" fill="none"/></svg>
<div class="t g" style="left:357.5px;top:804px;letter-spacing:-0.12px;">7263</div>
<div class="t g" style="left:387.4px;top:804px;letter-spacing:-0.18px;">Jira</div>
<div class="t g" style="left:451.4px;top:804px;letter-spacing:-0.12px;">dbo</div>
<div class="t g" style="left:500.4px;top:804px;">jiraaction</div>
<div class="t g" style="left:689.4px;top:804px;letter-spacing:0.03px;">action_author_created</div>
<div class="t g" style="left:942.5px;top:804px;letter-spacing:-0.12px;">218</div>
<div class="t g" style="left:974.1px;top:804px;letter-spacing:-0.03px;">13.61</div>
<div class="t g" style="left:1023.5px;top:804px;letter-spacing:-0.12px;">970</div>
<div class="t g" style="left:1059px;top:804px;font-style:italic;letter-spacing:-0.08px;">(null)</div>
<div class="t g" style="left:1089px;top:804px;letter-spacing:0.06px;">19.03.2019 21:57:07</div>
<div class="t g" style="left:1199px;top:804px;letter-spacing:0.06px;">19.03.2019 21:57:35</div>
<div class="t g" style="left:1339.1px;top:804px;">0.44</div>
<div class="t g" style="left:1373.5px;top:804px;letter-spacing:-0.12px;">245575913</div>
<div class="t g" style="left:1461.5px;top:804px;letter-spacing:-0.12px;">2</div>
<div class="t g" style="left:1474px;top:804px;letter-spacing:0.06px;">19.03.2019 18:57:35</div>
<svg style="left:325px;top:825px;" width="13" height="13" viewBox="0 0 13 13"><rect x="0.500" y="0.500" width="12" height="12" fill="#fff" stroke="#cdd0e0" stroke-width="1"/><path d="M2.800 6.800l2.600 2.700 5-6.300" stroke="#666" stroke-width="1.700" fill="none"/></svg>
<div class="t g" style="left:357.5px;top:825px;letter-spacing:-0.12px;">7264</div>
<div class="t g" style="left:387.4px;top:825px;letter-spacing:-0.18px;">Jira</div>
<div class="t g" style="left:451.4px;top:825px;letter-spacing:-0.12px;">dbo</div>
<div class="t g" style="left:500.4px;top:825px;">jiraaction</div>
<div class="t g" style="left:689.4px;top:825px;letter-spacing:-0.18px;">action_issue</div>
<div class="t g" style="left:942.5px;top:825px;letter-spacing:-0.12px;">136</div>
<div class="t g" style="left:974.1px;top:825px;letter-spacing:-0.03px;">17.09</div>
<div class="t g" style="left:1023.5px;top:825px;letter-spacing:-0.12px;">509</div>
<div class="t g" style="left:1059px;top:825px;font-style:italic;letter-spacing:-0.08px;">(null)</div>
<div class="t g" style="left:1089px;top:825px;letter-spacing:0.06px;">19.03.2019 21:57:07</div>
<div class="t g" style="left:1199px;top:825px;letter-spacing:0.06px;">19.03.2019 21:57:35</div>
<div class="t g" style="left:1339.1px;top:825px;">0.21</div>
<div class="t g" style="left:1373.5px;top:825px;letter-spacing:-0.12px;">245575913</div>
<div class="t g" style="left:1461.5px;top:825px;letter-spacing:-0.12px;">3</div>
<div class="t g" style="left:1474px;top:825px;letter-spacing:0.06px;">19.03.2019 18:57:35</div>
<svg style="left:325px;top:846px;" width="13" height="13" viewBox="0 0 13 13"><rect x="0.500" y="0.500" width="12" height="12" fill="#fff" stroke="#cdd0e0" stroke-width="1"/><path d="M2.800 6.800l2.600 2.700 5-6.300" stroke="#666" stroke-width="1.700" fill="none"/></svg>
<div class="t g" style="left:357.5px;top:846px;letter-spacing:-0.12px;">7265</div>
<div class="t g" style="left:387.4px;top:846px;letter-spacing:-0.18px;">Jira</div>
<div class="t g" style="left:451.4px;top:846px;letter-spacing:-0.12px;">dbo</div>
<div class="t g" style="left:500.4px;top:846px;">jiraaction</div>
<div class="t g" style="left:689.4px;top:846px;letter-spacing:-0.17px;">IX_jiraaction_missing_7232</div>
<div class="t g" style="left:942.5px;top:846px;letter-spacing:-0.12px;">252</div>
<div class="t g" style="left:974.1px;top:846px;letter-spacing:-0.03px;">12.01</div>
<div class="t g" style="left:1017.5px;top:846px;letter-spacing:0.09px;">1124</div>
<div class="t g" style="left:1059px;top:846px;font-style:italic;letter-spacing:-0.08px;">(null)</div>
<div class="t g" style="left:1089px;top:846px;letter-spacing:0.06px;">19.03.2019 21:57:07</div>
<div class="t g" style="left:1199px;top:846px;letter-spacing:0.06px;">19.03.2019 21:57:35</div>
<div class="t g" style="left:1339.1px;top:846px;">0.37</div>
<div class="t g" style="left:1373.5px;top:846px;letter-spacing:-0.12px;">245575913</div>
<div class="t g" style="left:1461.5px;top:846px;letter-spacing:-0.12px;">8</div>
<div class="t g" style="left:1474px;top:846px;letter-spacing:0.06px;">19.03.2019 18:57:35</div>
<svg style="left:325px;top:867px;" width="13" height="13" viewBox="0 0 13 13"><rect x="0.500" y="0.500" width="12" height="12" fill="#fff" stroke="#cdd0e0" stroke-width="1"/><path d="M2.800 6.800l2.600 2.700 5-6.300" stroke="#666" stroke-width="1.700" fill="none"/></svg>
<div class="t g" style="left:357.5px;top:867px;letter-spacing:-0.12px;">7266</div>
<div class="t g" style="left:387.4px;top:867px;letter-spacing:-0.18px;">Jira</div>
<div class="t g" style="left:451.4px;top:867px;letter-spacing:-0.12px;">dbo</div>
<div class="t g" style="left:500.4px;top:867px;letter-spacing:-0.22px;">remembermetoken</div>
<div class="t g" style="left:689.4px;top:867px;letter-spacing:-0.19px;">remembermetoken_username_index</div>
<div class="t g" style="left:954.5px;top:867px;letter-spacing:-0.12px;">8</div>
<div class="t g" style="left:974.1px;top:867px;letter-spacing:-0.03px;">35.29</div>
<div class="t g" style="left:1029.5px;top:867px;letter-spacing:-0.12px;">17</div>
<div class="t g" style="left:1059px;top:867px;font-style:italic;letter-spacing:-0.08px;">(null)</div>
<div class="t g" style="left:1089px;top:867px;letter-spacing:0.06px;">19.03.2019 21:57:07</div>
<div class="t g" style="left:1199px;top:867px;letter-spacing:0.06px;">19.03.2019 21:57:35</div>
<div class="t g" style="left:1339.1px;top:867px;">0.00</div>
<div class="t g" style="left:1373.5px;top:867px;letter-spacing:-0.12px;">334624235</div>
<div class="t g" style="left:1461.5px;top:867px;letter-spacing:-0.12px;">2</div>
<div class="t g" style="left:1474px;top:867px;letter-spacing:0.06px;">19.03.2019 18:57:35</div>
<svg style="left:325px;top:888px;" width="13" height="13" viewBox="0 0 13 13"><rect x="0.500" y="0.500" width="12" height="12" fill="#fff" stroke="#cdd0e0" stroke-width="1"/><path d="M2.800 6.800l2.600 2.700 5-6.300" stroke="#666" stroke-width="1.700" fill="none"/></svg>
<div class="t g" style="left:357.5px;top:888px;letter-spacing:-0.12px;">7267</div>
<div class="t g" style="left:387.4px;top:888px;letter-spacing:-0.18px;">Jira</div>
<div class="t g" style="left:451.4px;top:888px;letter-spacing:-0.12px;">dbo</div>
<div class="t g" style="left:500.4px;top:888px;letter-spacing:-0.07px;">rundetails</div>
<div class="t g" style="left:689.4px;top:888px;letter-spacing:-0.27px;">PK_rundetails</div>
<div class="t g" style="left:948.5px;top:888px;letter-spacing:-0.12px;">30</div>
<div class="t g" style="left:974.1px;top:888px;letter-spacing:-0.03px;">80.56</div>
<div class="t g" style="left:1029.5px;top:888px;letter-spacing:-0.12px;">36</div>
<div class="t g" style="left:1059px;top:888px;font-style:italic;letter-spacing:-0.08px;">(null)</div>
<div class="t g" style="left:1089px;top:888px;letter-spacing:0.06px;">19.03.2019 21:57:07</div>
<div class="t g" style="left:1199px;top:888px;letter-spacing:0.06px;">19.03.2019 21:57:35</div>
<div class="t g" style="left:1339.1px;top:888px;">0.00</div>
<div class="t g" style="left:1373.5px;top:888px;letter-spacing:-0.12px;">494624805</div>
<div class="t g" style="left:1461.5px;top:888px;letter-spacing:-0.12px;">1</div>
<div class="t g" style="left:1474px;top:888px;letter-spacing:0.06px;">19.03.2019 18:57:35</div>
<svg style="left:325px;top:909px;" width="13" height="13" viewBox="0 0 13 13"><rect x="0.500" y="0.500" width="12" height="12" fill="#fff" stroke="#cdd0e0" stroke-width="1"/><path d="M2.800 6.800l2.600 2.700 5-6.300" stroke="#666" stroke-width="1.700" fill="none"/></svg>
<div class="t g" style="left:357.5px;top:909px;letter-spacing:-0.12px;">7268</div>
<div class="t g" style="left:387.4px;top:909px;letter-spacing:-0.18px;">Jira</div>
<div class="t g" style="left:451.4px;top:909px;letter-spacing:-0.12px;">dbo</div>
<div class="t g" style="left:500.4px;top:909px;letter-spacing:-0.07px;">rundetails</div>
<div class="t g" style="left:689.4px;top:909px;letter-spacing:-0.06px;">rundetails_jobid_idx</div>
<div class="t g" style="left:948.5px;top:909px;letter-spacing:-0.12px;">24</div>
<div class="t g" style="left:974.1px;top:909px;letter-spacing:-0.03px;">15.22</div>
<div class="t g" style="left:1029.5px;top:909px;letter-spacing:-0.12px;">92</div>
<div class="t g" style="left:1059px;top:909px;font-style:italic;letter-spacing:-0.08px;">(null)</div>
<div class="t g" style="left:1089px;top:909px;letter-spacing:0.06px;">19.03.2019 21:57:07</div>
<div class="t g" style="left:1199px;top:909px;letter-spacing:0.06px;">19.03.2019 21:57:35</div>
<div class="t g" style="left:1333.1px;top:909px;letter-spacing:-0.03px;">15.22</div>
<div class="t g" style="left:1373.5px;top:909px;letter-spacing:-0.12px;">494624805</div>
<div class="t g" style="left:1461.5px;top:909px;letter-spacing:-0.12px;">2</div>
<div class="t g" style="left:1474px;top:909px;letter-spacing:0.06px;">19.03.2019 18:57:35</div>
<div style="left:299px;top:489px;width:506px;height:34px;background:#eeeef2;border:5px solid #ed1c24;"></div>
<div style="left:425.5px;top:494px;width:2px;height:24px;background:#d9dbe7;"></div>
<div style="left:549px;top:494px;width:2px;height:24px;background:#d9dbe7;"></div>
<div style="left:680px;top:494px;width:2px;height:24px;background:#d9dbe7;"></div>
<div style="left:304px;top:517px;width:496px;height:1px;background:#d3d5e2;"></div>
<div class="t g" style="left:310.7px;top:496.6px;color:#0e70c0;letter-spacing:-0.11px;">Only in Source (3966)</div>
<div class="t g" style="left:436px;top:496.6px;letter-spacing:0.02px;">Different Records (0)</div>
<div class="t g" style="left:560.7px;top:496.6px;letter-spacing:0.04px;">Only in Target (44458)</div>
<div class="t g" style="left:691.7px;top:496.6px;letter-spacing:-0.05px;">Identical Records (0)</div>
<div style="left:1897px;top:518px;width:16px;height:409px;background:#e4e4e6;"></div>
<svg style="left:1901px;top:523px;" width="9" height="5" viewBox="0 0 9 5"><path d="M0 5h9l-4.500-5z" fill="#a3a3a6"/></svg>
<div style="left:1901px;top:535px;width:9px;height:14px;background:#b7b7ba;"></div>
<div style="left:1897px;top:910px;width:16px;height:17px;background:#e1e1e6;"></div>
<svg style="left:1901px;top:917px;" width="9" height="5" viewBox="0 0 9 5"><path d="M0 0h9l-4.500 5z" fill="#8c8c90"/></svg>
<div style="left:300px;top:927px;width:1613px;height:19px;background:#e4e4e4;"></div>
<div style="left:300px;top:927px;width:177px;height:19px;background:#fdfdfd;"></div>
<div style="left:477px;top:927px;width:17px;height:19px;background:#e0e0e3;"></div>
<div style="left:1880px;top:927px;width:17px;height:19px;background:#e1e1e6;"></div>
<div style="left:1897px;top:927px;width:16px;height:19px;background:#eeeef2;"></div>
<svg style="left:304px;top:933px;" width="10" height="8" viewBox="0 0 10 8"><rect x="0" y="0.300" width="1.400" height="7.400" fill="#b4b4b8"/><path d="M5.400 0.300v7.400l-3.600-3.700z" fill="#b4b4b8"/><path d="M9.300 0.300v7.400l-3.600-3.700z" fill="#b4b4b8"/></svg>
<svg style="left:323px;top:933px;" width="5" height="8" viewBox="0 0 5 8"><path d="M4.300 0.300v7.400l-4-3.700z" fill="#b4b4b8"/></svg>
<div class="t g" style="left:348.4px;top:930px;letter-spacing:-0.12px;">Record 1 of 3966</div>
<svg style="left:452px;top:933px;" width="5" height="8" viewBox="0 0 5 8"><path d="M0 0.300v7.400l4-3.700z" fill="#8c8c90"/></svg>
<svg style="left:466px;top:933px;" width="10" height="8" viewBox="0 0 10 8"><path d="M0 0.300v7.400l3.600-3.700z" fill="#8c8c90"/><path d="M3.900 0.300v7.400l3.600-3.700z" fill="#8c8c90"/><rect x="7.800" y="0.300" width="1.400" height="7.400" fill="#8c8c90"/></svg>
<svg style="left:482px;top:932px;" width="5" height="9" viewBox="0 0 5 9"><path d="M4.700 0v9l-4.500-4.500z" fill="#8c8c90"/></svg>
<svg style="left:1886px;top:932px;" width="5" height="9" viewBox="0 0 5 9"><path d="M0 0v9l4.800-4.500z" fill="#8c8c90"/></svg>
<!-- bottom -->
<svg style="left:7px;top:964px;" width="16" height="16" viewBox="0 0 16 16"><path d="M10.200 1.600h-8.700v12.800h8.700" stroke="#3c3c3c" stroke-width="1.300" fill="none"/><path d="M4.300 7.300h6.200v-3.200l4.500 4.100-4.500 4.100v-3.200h-6.200z" fill="#3c3c3c"/></svg>
<div class="t g" style="left:25px;top:965px;letter-spacing:0.16px;">Output</div>
<svg style="left:69px;top:964px;" width="14" height="16" viewBox="0 0 14 16"><path d="M4 3v-1h1.500l1-1.500h1l1 1.500h1.500v1" stroke="#424242" stroke-width="1" fill="none"/><path d="M5 14.500h-3.500v-11.500h10v5" stroke="#424242" stroke-width="1.200" fill="none"/><circle cx="9.500" cy="11.500" r="3.800" fill="#e51400"/><path d="M8 10l3 3M11 10l-3 3" stroke="#fff" stroke-width="1.100"/></svg>
<div class="t g" style="left:84px;top:965px;letter-spacing:-0.14px;">Error List</div>
<div style="left:4px;top:985px;width:59px;height:4px;background:#cccedb;"></div>
<div style="left:64px;top:985px;width:68px;height:4px;background:#cccedb;"></div>
<div style="left:0px;top:989px;width:1915px;height:2px;background:#007acc;"></div>
</body></html>
